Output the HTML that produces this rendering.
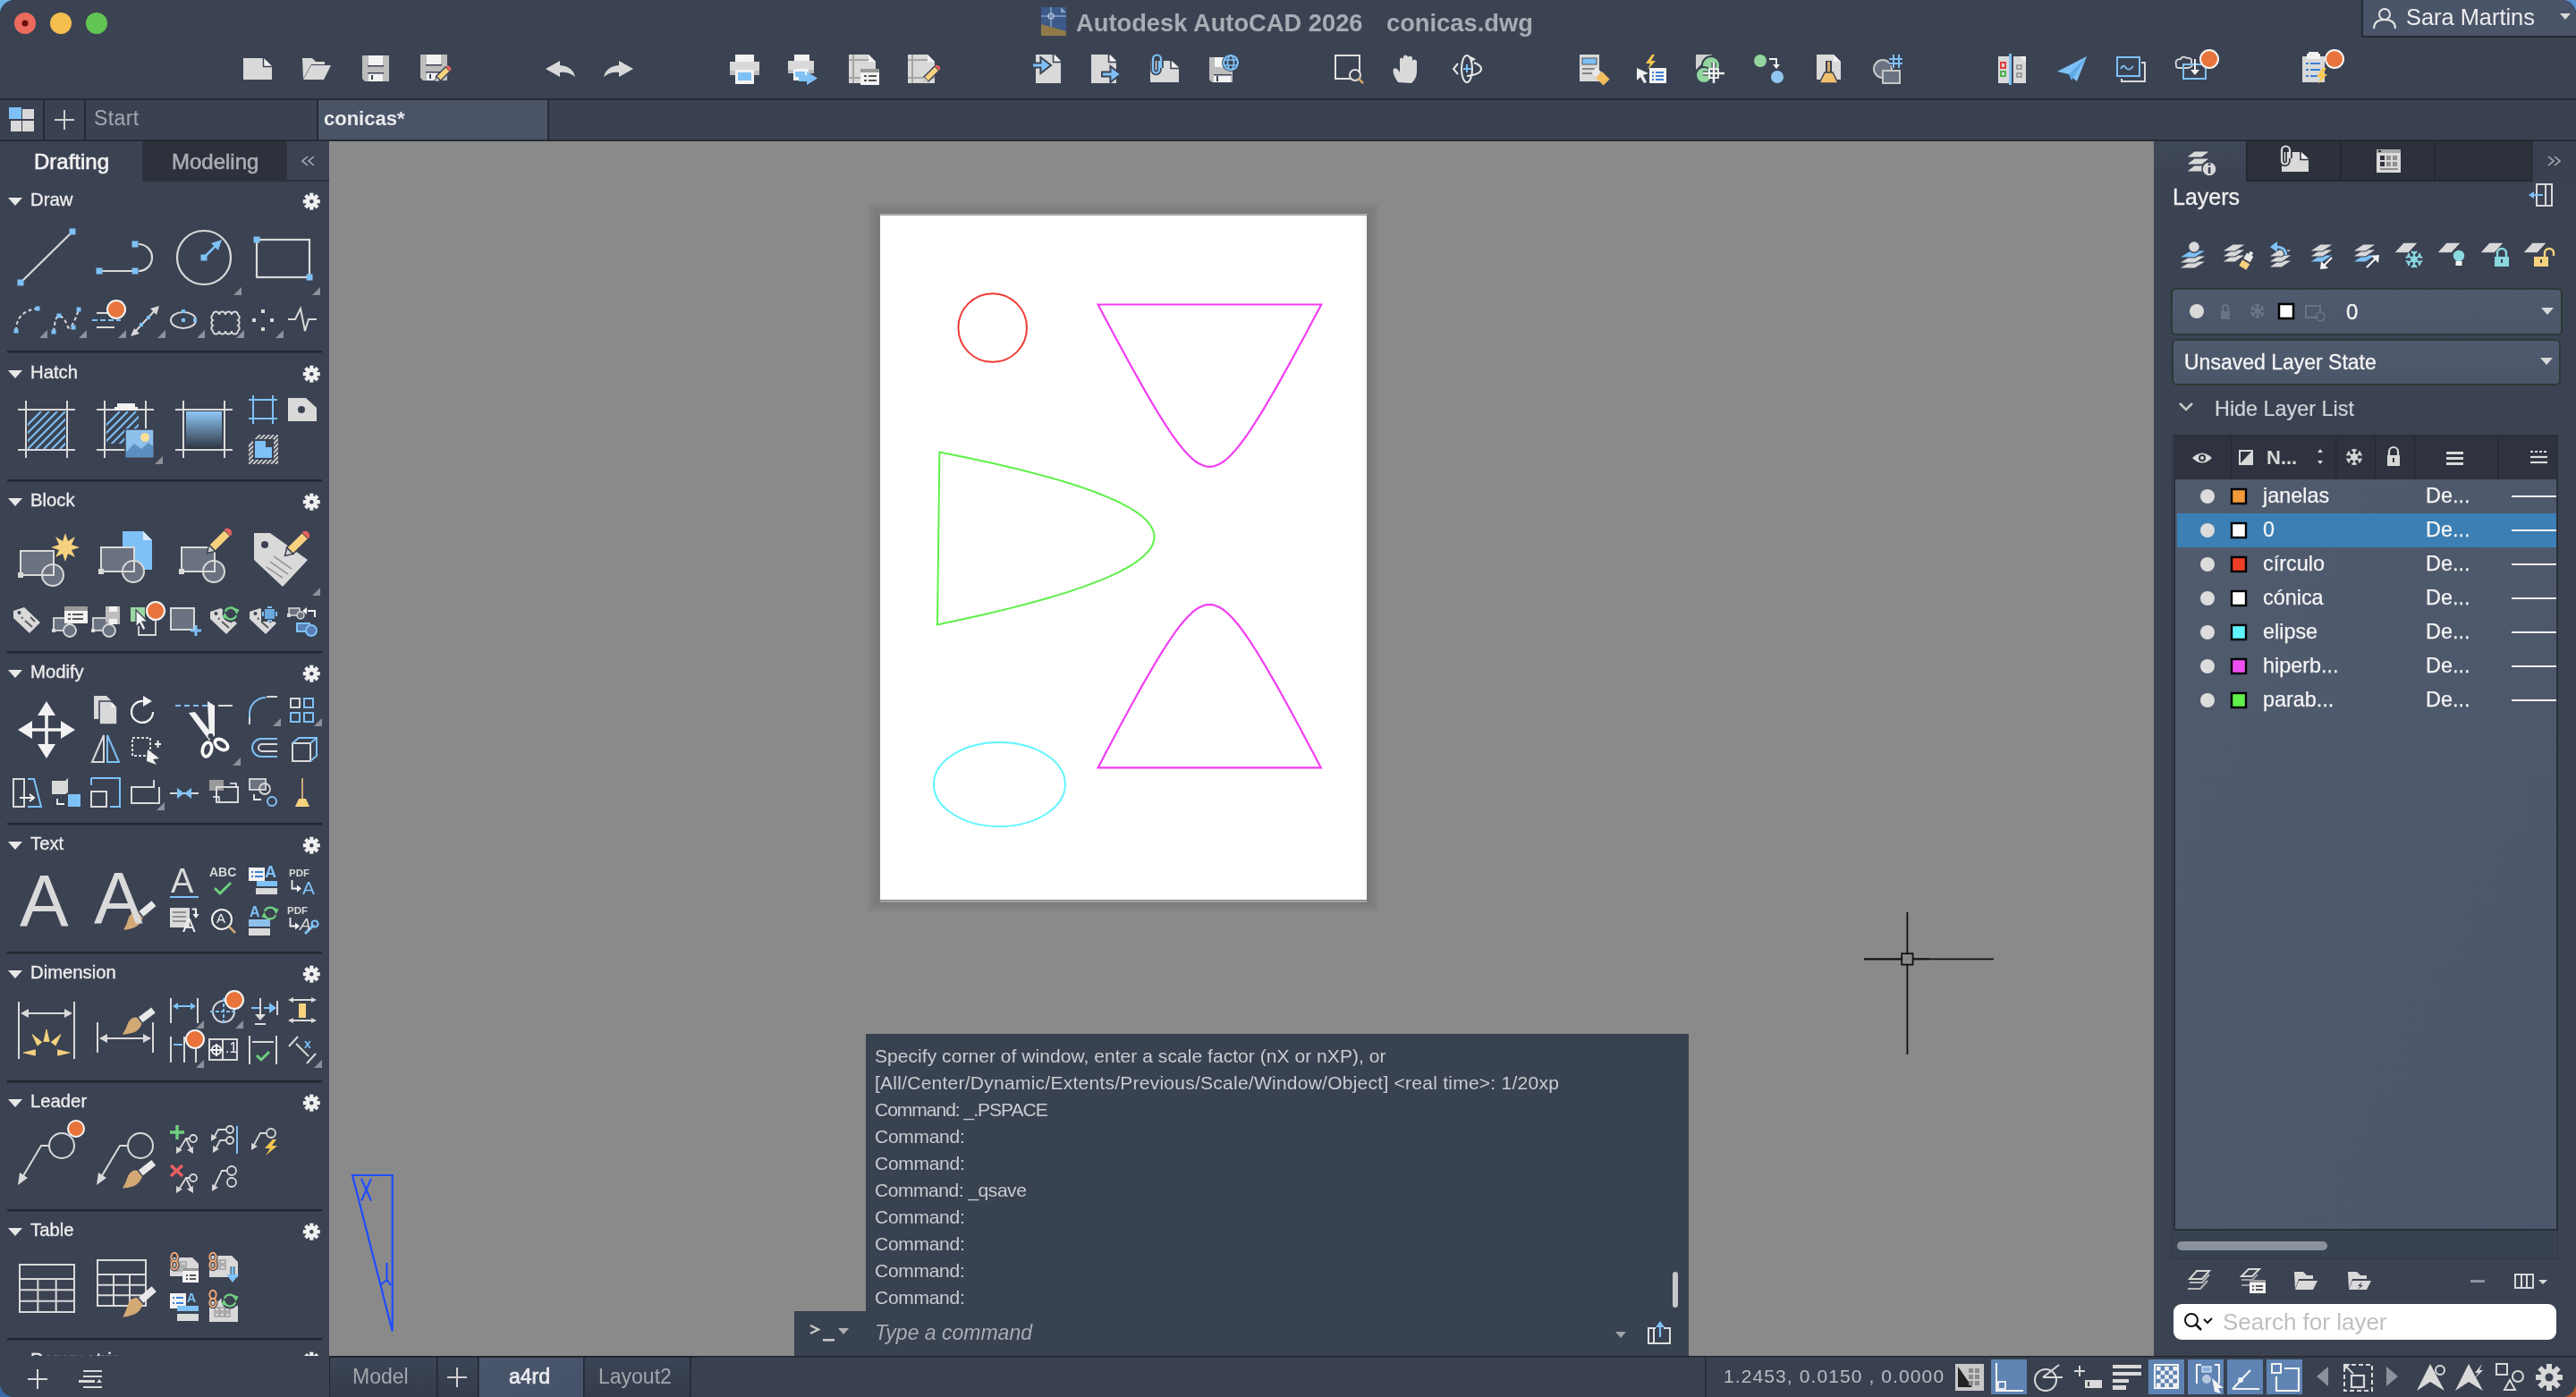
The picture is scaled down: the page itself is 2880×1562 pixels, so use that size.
<!DOCTYPE html>
<html><head><meta charset="utf-8">
<style>
*{margin:0;padding:0;box-sizing:border-box}
html,body{width:2880px;height:1562px;overflow:hidden;background:linear-gradient(90deg,#6cb4e6 0,#6cb4e6 50%,#5a90d0 50%);}
body{font-family:"Liberation Sans",sans-serif;position:relative}
#win{position:absolute;left:0;top:0;width:2880px;height:1562px;border-radius:16px;overflow:hidden;background:#3b4252}
.cn{position:absolute;width:40px;height:40px}
.t{position:absolute;white-space:nowrap;line-height:1;will-change:transform}
</style></head><body>
<div class="cn" style="left:0;top:0;background:#6cb4e6"></div><div class="cn" style="right:0;top:0;background:#5a90d0"></div><div class="cn" style="left:0;bottom:0;background:#3a6aa8"></div><div class="cn" style="right:0;bottom:0;background:#b8582a"></div>
<div id="win">
<svg width="2880" height="1562" viewBox="0 0 2880 1562" style="position:absolute;left:0;top:0"><rect x="368" y="158" width="2040" height="1358" fill="#8a8a8a" /><rect x="970" y="227" width="572" height="793" fill="#000" fill-opacity="0.017"/><rect x="972" y="229" width="568" height="789" fill="#000" fill-opacity="0.017"/><rect x="974" y="231" width="564" height="785" fill="#000" fill-opacity="0.017"/><rect x="976" y="233" width="560" height="781" fill="#000" fill-opacity="0.017"/><rect x="978" y="235" width="556" height="777" fill="#000" fill-opacity="0.017"/><rect x="980" y="237" width="552" height="773" fill="#000" fill-opacity="0.017"/><rect x="982" y="239" width="548" height="769" fill="#000" fill-opacity="0.017"/><rect x="983" y="238" width="546" height="1" fill="#777" /><rect x="983" y="239" width="546" height="1.5" fill="#b5b5b5" /><rect x="983" y="1006" width="546" height="1" fill="#777" /><rect x="983" y="1007" width="546" height="1.5" fill="#b5b5b5" /><rect x="982" y="240" width="2" height="768" fill="#7a7a7a" /><rect x="1528" y="240" width="2" height="768" fill="#7a7a7a" /><rect x="984" y="241" width="544" height="765" fill="#ffffff" /><circle cx="1109.7" cy="366.5" r="38.3" fill="none" stroke="#ee3b33" stroke-width="2" /><path d="M1227.6,340.5 L1230.7,346.4 L1233.8,352.3 L1237.0,358.2 L1240.1,364.0 L1243.2,369.9 L1246.3,375.7 L1249.4,381.5 L1252.6,387.3 L1255.7,393.0 L1258.8,398.8 L1261.9,404.5 L1265.0,410.1 L1268.2,415.8 L1271.3,421.4 L1274.4,426.9 L1277.5,432.4 L1280.6,437.9 L1283.8,443.3 L1286.9,448.6 L1290.0,453.9 L1293.1,459.1 L1296.2,464.2 L1299.4,469.2 L1302.5,474.1 L1305.6,478.9 L1308.7,483.5 L1311.8,488.0 L1315.0,492.4 L1318.1,496.5 L1321.2,500.4 L1324.3,504.1 L1327.4,507.6 L1330.6,510.7 L1333.7,513.5 L1336.8,516.0 L1339.9,518.0 L1343.0,519.6 L1346.2,520.8 L1349.3,521.6 L1352.4,521.8 L1355.5,521.6 L1358.6,520.8 L1361.8,519.6 L1364.9,518.0 L1368.0,516.0 L1371.1,513.5 L1374.2,510.7 L1377.4,507.6 L1380.5,504.1 L1383.6,500.4 L1386.7,496.5 L1389.8,492.4 L1393.0,488.0 L1396.1,483.5 L1399.2,478.9 L1402.3,474.1 L1405.4,469.2 L1408.6,464.2 L1411.7,459.1 L1414.8,453.9 L1417.9,448.6 L1421.0,443.3 L1424.2,437.9 L1427.3,432.4 L1430.4,426.9 L1433.5,421.4 L1436.6,415.8 L1439.8,410.1 L1442.9,404.5 L1446.0,398.8 L1449.1,393.0 L1452.2,387.3 L1455.4,381.5 L1458.5,375.7 L1461.6,369.9 L1464.7,364.0 L1467.8,358.2 L1471.0,352.3 L1474.1,346.4 L1477.2,340.5 Z" fill="none" stroke="#f23ef2" stroke-width="2.2" /><path d="M1227.6,858.4 L1230.7,852.5 L1233.8,846.5 L1236.9,840.6 L1240.1,834.7 L1243.2,828.8 L1246.3,823.0 L1249.4,817.1 L1252.5,811.3 L1255.6,805.5 L1258.8,799.8 L1261.9,794.0 L1265.0,788.3 L1268.1,782.7 L1271.2,777.0 L1274.3,771.4 L1277.4,765.9 L1280.6,760.4 L1283.7,755.0 L1286.8,749.6 L1289.9,744.3 L1293.0,739.1 L1296.1,734.0 L1299.2,728.9 L1302.4,724.0 L1305.5,719.2 L1308.6,714.5 L1311.7,710.0 L1314.8,705.6 L1317.9,701.4 L1321.0,697.5 L1324.2,693.8 L1327.3,690.3 L1330.4,687.2 L1333.5,684.3 L1336.6,681.9 L1339.7,679.8 L1342.9,678.2 L1346.0,677.0 L1349.1,676.2 L1352.2,676.0 L1355.3,676.2 L1358.4,677.0 L1361.5,678.2 L1364.7,679.8 L1367.8,681.9 L1370.9,684.3 L1374.0,687.2 L1377.1,690.3 L1380.2,693.8 L1383.4,697.5 L1386.5,701.4 L1389.6,705.6 L1392.7,710.0 L1395.8,714.5 L1398.9,719.2 L1402.0,724.0 L1405.2,728.9 L1408.3,734.0 L1411.4,739.1 L1414.5,744.3 L1417.6,749.6 L1420.7,755.0 L1423.8,760.4 L1427.0,765.9 L1430.1,771.4 L1433.2,777.0 L1436.3,782.7 L1439.4,788.3 L1442.5,794.0 L1445.7,799.8 L1448.8,805.5 L1451.9,811.3 L1455.0,817.1 L1458.1,823.0 L1461.2,828.8 L1464.3,834.7 L1467.5,840.6 L1470.6,846.5 L1473.7,852.5 L1476.8,858.4 Z" fill="none" stroke="#f23ef2" stroke-width="2.2" /><path d="M1050.4,505.6 L1066.2,508.7 L1081.4,511.8 L1096.1,515.0 L1110.3,518.1 L1123.9,521.2 L1137.0,524.3 L1149.6,527.5 L1161.6,530.6 L1173.1,533.8 L1184.1,536.9 L1194.5,540.0 L1204.4,543.2 L1213.7,546.4 L1222.5,549.5 L1230.8,552.7 L1238.5,555.8 L1245.7,559.0 L1252.4,562.2 L1258.5,565.4 L1264.1,568.5 L1269.1,571.7 L1273.7,574.9 L1277.6,578.1 L1281.1,581.3 L1284.0,584.5 L1286.4,587.7 L1288.2,590.9 L1289.5,594.1 L1290.3,597.3 L1290.5,600.5 L1290.2,603.7 L1289.3,606.9 L1288.0,610.2 L1286.1,613.4 L1283.6,616.6 L1280.6,619.8 L1277.1,623.1 L1273.0,626.3 L1268.4,629.6 L1263.3,632.8 L1257.6,636.0 L1251.4,639.3 L1244.7,642.6 L1237.4,645.8 L1229.6,649.1 L1221.2,652.3 L1212.3,655.6 L1202.9,658.9 L1193.0,662.2 L1182.5,665.4 L1171.4,668.7 L1159.9,672.0 L1147.7,675.3 L1135.1,678.6 L1121.9,681.9 L1108.2,685.2 L1094.0,688.5 L1079.2,691.8 L1063.9,695.1 L1048.0,698.4 Z" fill="none" stroke="#5ff04a" stroke-width="2" /><ellipse cx="1117.4" cy="877" rx="73.5" ry="47" fill="none" stroke="#5ff5ff" stroke-width="2"/><g stroke="#1f4dff" stroke-width="2.2" fill="none"><path d="M394,1314 H438.7 V1488.5 Z"/><path d="M404,1318 L415,1342.6 M415,1318 L404,1342.6"/><path d="M432.5,1412 V1431 L425,1437 M432.5,1431 L437,1437"/></g><g stroke="#111" stroke-width="1.8"><line x1="2132.4" y1="1020" x2="2132.4" y2="1066"/><line x1="2132.4" y1="1079" x2="2132.4" y2="1179"/><line x1="2084" y1="1072.3" x2="2126" y2="1072.3" stroke-width="2.2"/><line x1="2139" y1="1072.3" x2="2157" y2="1072.3" stroke-width="2.2"/><line x1="2157" y1="1072.3" x2="2229" y2="1072.3"/><rect x="2126.2" y="1066.2" width="12.4" height="12.4" fill="none"/></g><rect x="968" y="1156" width="920" height="311" fill="#394250" /><rect x="888" y="1466" width="1000" height="50" fill="#394250" /><rect x="1870" y="1422" width="6" height="40" fill="#c4c7cc" rx="3"/><path d="M906,1482 L915,1486.5 L906,1491" fill="none" stroke="#c8c8c8" stroke-width="2.4" /><rect x="920" y="1497" width="13" height="2.6" fill="#c8c8c8" /><polygon points="937,1485 949,1485 943,1492" fill="#b0b0b0" stroke="none" stroke-width="2" /><polygon points="1806,1489 1818,1489 1812,1496" fill="#9ea3ab" stroke="none" stroke-width="2" /><path d="M1851,1485 H1843 V1502 H1867 V1485 H1860" fill="none" stroke="#e0e0e0" stroke-width="2" /><line x1="1849" y1="1485" x2="1849" y2="1502" stroke="#e0e0e0" stroke-width="2" /><line x1="1856" y1="1481" x2="1856" y2="1495" stroke="#7ec1f6" stroke-width="2.2" /><polygon points="1851,1484 1861,1484 1856,1477" fill="#7ec1f6" stroke="none" stroke-width="2" /><rect x="0" y="158" width="368" height="1358" fill="#3b4252" /><rect x="159" y="158" width="162" height="45" fill="#2c313c" /><rect x="321" y="201" width="47" height="2" fill="#2c313c" /><path d="M344,175 L338,180 L344,185 M351,175 L345,180 L351,185" fill="none" stroke="#a9acb3" stroke-width="1.6" /><polygon points="9,221 25,221 17,230" fill="#e8e8e8" stroke="none" stroke-width="2" /><g transform="translate(348.3,225.2)"><rect x="-2.1" y="-9.5" width="4.2" height="5" fill="#f0f0f0" transform="rotate(0)"/><rect x="-2.1" y="-9.5" width="4.2" height="5" fill="#f0f0f0" transform="rotate(45)"/><rect x="-2.1" y="-9.5" width="4.2" height="5" fill="#f0f0f0" transform="rotate(90)"/><rect x="-2.1" y="-9.5" width="4.2" height="5" fill="#f0f0f0" transform="rotate(135)"/><rect x="-2.1" y="-9.5" width="4.2" height="5" fill="#f0f0f0" transform="rotate(180)"/><rect x="-2.1" y="-9.5" width="4.2" height="5" fill="#f0f0f0" transform="rotate(225)"/><rect x="-2.1" y="-9.5" width="4.2" height="5" fill="#f0f0f0" transform="rotate(270)"/><rect x="-2.1" y="-9.5" width="4.2" height="5" fill="#f0f0f0" transform="rotate(315)"/><circle r="6.7" fill="#f0f0f0"/><circle r="2.2" fill="#3b4252"/></g><line x1="24" y1="315" x2="80" y2="260" stroke="#d9d9d9" stroke-width="2.2" /><rect x="19.5" y="312.5" width="7" height="7" fill="#7ec1f6" /><rect x="77.5" y="255.5" width="7" height="7" fill="#7ec1f6" /><line x1="111" y1="303" x2="151" y2="303" stroke="#d9d9d9" stroke-width="2.2" /><path d="M155,273 A15,15 0 0 1 155,303" fill="none" stroke="#d9d9d9" stroke-width="2.2" /><rect x="107.5" y="299.5" width="7" height="7" fill="#7ec1f6" /><rect x="147.5" y="299.5" width="7" height="7" fill="#7ec1f6" /><rect x="147.5" y="269.5" width="7" height="7" fill="#7ec1f6" /><circle cx="228" cy="288" r="30" fill="none" stroke="#d9d9d9" stroke-width="2.2" /><rect x="224.5" y="284.5" width="7" height="7" fill="#7ec1f6" /><line x1="229" y1="287" x2="245" y2="271" stroke="#7ec1f6" stroke-width="2.5" /><polygon points="248,268 236,272 244,280" fill="#7ec1f6" stroke="none" stroke-width="2" /><polygon points="270,330 261,330 270,321" fill="#8c919a" stroke="none" stroke-width="2" /><rect x="287" y="268" width="59" height="42" fill="none" stroke="#d9d9d9" stroke-width="2.2"/><rect x="283.5" y="264.5" width="7" height="7" fill="#7ec1f6" /><rect x="342.5" y="306.5" width="7" height="7" fill="#7ec1f6" /><polygon points="358,330 349,330 358,321" fill="#8c919a" stroke="none" stroke-width="2" /><path d="M18,370 Q18,348 42,345" fill="none" stroke="#d9d9d9" stroke-width="2" stroke-dasharray="4 3"/><rect x="15.5" y="367.5" width="5" height="5" fill="#7ec1f6" /><rect x="39.5" y="342.5" width="5" height="5" fill="#7ec1f6" /><path d="M60,371 Q62,352 66,353 Q72,354 76,366 Q80,370 88,346" fill="none" stroke="#d9d9d9" stroke-width="2" stroke-dasharray="4 3"/><rect x="57.5" y="368.5" width="5" height="5" fill="#7ec1f6" /><rect x="63.5" y="350.5" width="5" height="5" fill="#7ec1f6" /><rect x="79.5" y="363.5" width="5" height="5" fill="#7ec1f6" /><rect x="85.5" y="343.5" width="5" height="5" fill="#7ec1f6" /><line x1="108" y1="350" x2="130" y2="350" stroke="#d9d9d9" stroke-width="2" /><line x1="103" y1="358" x2="135" y2="358" stroke="#7ec1f6" stroke-width="2" stroke-dasharray="6 3"/><line x1="108" y1="366" x2="128" y2="366" stroke="#d9d9d9" stroke-width="2" /><circle cx="130" cy="346" r="11" fill="#f4f4f4" stroke="none" stroke-width="2" /><circle cx="130" cy="346" r="9" fill="#e8743b" stroke="none" stroke-width="2" /><line x1="150" y1="372" x2="176" y2="344" stroke="#d9d9d9" stroke-width="2" /><polygon points="146,376 156,373 150,367" fill="#d9d9d9" stroke="none" stroke-width="2" /><polygon points="178,342 168,345 175,352" fill="#d9d9d9" stroke="none" stroke-width="2" /><rect x="156.0" y="361.0" width="4" height="4" fill="#7ec1f6" /><rect x="164.0" y="353.0" width="4" height="4" fill="#7ec1f6" /><ellipse cx="205" cy="358" rx="14" ry="9" fill="none" stroke="#d9d9d9" stroke-width="2"/><rect x="203.0" y="356.0" width="4" height="4" fill="#7ec1f6" /><rect x="203.0" y="346.0" width="4" height="4" fill="#7ec1f6" /><rect x="216.0" y="356.0" width="4" height="4" fill="#7ec1f6" /><path d="M238,352 a3.5,3.5 0 0 1 7,0 a3.5,3.5 0 0 1 7,0 a3.5,3.5 0 0 1 7,0 a3.5,3.5 0 0 1 7,0 a3.5,3.5 0 0 1 0,6 a3.5,3.5 0 0 1 0,6 a3.5,3.5 0 0 1 0,6 a3.5,3.5 0 0 1 -7,0 a3.5,3.5 0 0 1 -7,0 a3.5,3.5 0 0 1 -7,0 a3.5,3.5 0 0 1 -7,0 a3.5,3.5 0 0 1 0,-6 a3.5,3.5 0 0 1 0,-6 a3.5,3.5 0 0 1 0,-6 " fill="none" stroke="#d9d9d9" stroke-width="2"/><rect x="292.0" y="346.0" width="4" height="4" fill="#d9d9d9" /><rect x="282.0" y="356.0" width="4" height="4" fill="#d9d9d9" /><rect x="302.0" y="356.0" width="4" height="4" fill="#d9d9d9" /><rect x="292.0" y="366.0" width="4" height="4" fill="#d9d9d9" /><path d="M322,357 H330 L336,345 L341,370 L345,357 H354" fill="none" stroke="#d9d9d9" stroke-width="2" /><polygon points="53,378 44,378 53,369" fill="#8c919a" stroke="none" stroke-width="2" /><polygon points="97,378 88,378 97,369" fill="#8c919a" stroke="none" stroke-width="2" /><polygon points="141,378 132,378 141,369" fill="#8c919a" stroke="none" stroke-width="2" /><polygon points="185,378 176,378 185,369" fill="#8c919a" stroke="none" stroke-width="2" /><polygon points="229,378 220,378 229,369" fill="#8c919a" stroke="none" stroke-width="2" /><polygon points="273,378 264,378 273,369" fill="#8c919a" stroke="none" stroke-width="2" /><polygon points="317,378 308,378 317,369" fill="#8c919a" stroke="none" stroke-width="2" /><rect x="8" y="392" width="352" height="2.5" fill="#22262e" /><polygon points="9,414 25,414 17,423" fill="#e8e8e8" stroke="none" stroke-width="2" /><g transform="translate(348.3,418.2)"><rect x="-2.1" y="-9.5" width="4.2" height="5" fill="#f0f0f0" transform="rotate(0)"/><rect x="-2.1" y="-9.5" width="4.2" height="5" fill="#f0f0f0" transform="rotate(45)"/><rect x="-2.1" y="-9.5" width="4.2" height="5" fill="#f0f0f0" transform="rotate(90)"/><rect x="-2.1" y="-9.5" width="4.2" height="5" fill="#f0f0f0" transform="rotate(135)"/><rect x="-2.1" y="-9.5" width="4.2" height="5" fill="#f0f0f0" transform="rotate(180)"/><rect x="-2.1" y="-9.5" width="4.2" height="5" fill="#f0f0f0" transform="rotate(225)"/><rect x="-2.1" y="-9.5" width="4.2" height="5" fill="#f0f0f0" transform="rotate(270)"/><rect x="-2.1" y="-9.5" width="4.2" height="5" fill="#f0f0f0" transform="rotate(315)"/><circle r="6.7" fill="#f0f0f0"/><circle r="2.2" fill="#3b4252"/></g><line x1="20" y1="458" x2="84" y2="458" stroke="#d9d9d9" stroke-width="2" /><line x1="20" y1="503" x2="84" y2="503" stroke="#d9d9d9" stroke-width="2" /><line x1="29" y1="448" x2="29" y2="512" stroke="#d9d9d9" stroke-width="2" /><line x1="75" y1="448" x2="75" y2="512" stroke="#d9d9d9" stroke-width="2" /><clipPath id="hc1"><rect x="31" y="460" width="42" height="42"/></clipPath><g clip-path="url(#hc1)"><line x1="4" y1="502" x2="46" y2="460" stroke="#7ec1f6" stroke-width="2"/><line x1="13" y1="502" x2="55" y2="460" stroke="#7ec1f6" stroke-width="2"/><line x1="22" y1="502" x2="64" y2="460" stroke="#7ec1f6" stroke-width="2"/><line x1="31" y1="502" x2="73" y2="460" stroke="#7ec1f6" stroke-width="2"/><line x1="40" y1="502" x2="82" y2="460" stroke="#7ec1f6" stroke-width="2"/><line x1="49" y1="502" x2="91" y2="460" stroke="#7ec1f6" stroke-width="2"/><line x1="58" y1="502" x2="100" y2="460" stroke="#7ec1f6" stroke-width="2"/><line x1="67" y1="502" x2="109" y2="460" stroke="#7ec1f6" stroke-width="2"/><line x1="76" y1="502" x2="118" y2="460" stroke="#7ec1f6" stroke-width="2"/><line x1="85" y1="502" x2="127" y2="460" stroke="#7ec1f6" stroke-width="2"/><line x1="94" y1="502" x2="136" y2="460" stroke="#7ec1f6" stroke-width="2"/></g><line x1="108" y1="458" x2="172" y2="458" stroke="#d9d9d9" stroke-width="2" /><line x1="108" y1="503" x2="172" y2="503" stroke="#d9d9d9" stroke-width="2" /><line x1="117" y1="448" x2="117" y2="512" stroke="#d9d9d9" stroke-width="2" /><line x1="163" y1="448" x2="163" y2="512" stroke="#d9d9d9" stroke-width="2" /><clipPath id="hc2"><rect x="119" y="460" width="36" height="36"/></clipPath><g clip-path="url(#hc2)"><line x1="92" y1="502" x2="134" y2="460" stroke="#7ec1f6" stroke-width="2"/><line x1="101" y1="502" x2="143" y2="460" stroke="#7ec1f6" stroke-width="2"/><line x1="110" y1="502" x2="152" y2="460" stroke="#7ec1f6" stroke-width="2"/><line x1="119" y1="502" x2="161" y2="460" stroke="#7ec1f6" stroke-width="2"/><line x1="128" y1="502" x2="170" y2="460" stroke="#7ec1f6" stroke-width="2"/><line x1="137" y1="502" x2="179" y2="460" stroke="#7ec1f6" stroke-width="2"/><line x1="146" y1="502" x2="188" y2="460" stroke="#7ec1f6" stroke-width="2"/><line x1="155" y1="502" x2="197" y2="460" stroke="#7ec1f6" stroke-width="2"/><line x1="164" y1="502" x2="206" y2="460" stroke="#7ec1f6" stroke-width="2"/><line x1="173" y1="502" x2="215" y2="460" stroke="#7ec1f6" stroke-width="2"/><line x1="182" y1="502" x2="224" y2="460" stroke="#7ec1f6" stroke-width="2"/></g><rect x="131" y="451" width="20" height="5" fill="#f2f2f2" /><rect x="128" y="455" width="26" height="4" fill="#f2f2f2" /><rect x="140" y="480" width="32" height="32" fill="#8ec0ec" stroke="#3b4252" stroke-width="1.5"/><circle cx="162" cy="489" r="5" fill="#f6e09a" stroke="none" stroke-width="2" /><path d="M140.8,506 L150,496 L158,502 L166,495 L171.2,499 V511.2 H140.8 Z" fill="#5a8fc0" stroke="none" stroke-width="2" /><polygon points="182,519 173,519 182,510" fill="#8c919a" stroke="none" stroke-width="2" /><line x1="196" y1="458" x2="260" y2="458" stroke="#d9d9d9" stroke-width="2" /><line x1="196" y1="503" x2="260" y2="503" stroke="#d9d9d9" stroke-width="2" /><line x1="205" y1="448" x2="205" y2="512" stroke="#d9d9d9" stroke-width="2" /><line x1="251" y1="448" x2="251" y2="512" stroke="#d9d9d9" stroke-width="2" /><defs><linearGradient id="grd" x1="0" y1="0" x2="0" y2="1"><stop offset="0" stop-color="#8fc8f8"/><stop offset="1" stop-color="#2e3542"/></linearGradient></defs><rect x="208" y="460" width="40" height="42" fill="url(#grd)" /><line x1="278" y1="447" x2="310" y2="447" stroke="#7ec1f6" stroke-width="2" /><line x1="278" y1="468" x2="310" y2="468" stroke="#7ec1f6" stroke-width="2" /><line x1="283" y1="442" x2="283" y2="474" stroke="#7ec1f6" stroke-width="2" /><line x1="305" y1="442" x2="305" y2="474" stroke="#7ec1f6" stroke-width="2" /><polygon points="322,445 342,445 354,456 354,471 322,471" fill="#d9d9d9" stroke="none" stroke-width="2" /><circle cx="337" cy="458" r="4" fill="#3b4252" stroke="none" stroke-width="2" /><clipPath id="hc3"><path d="M278,486 H311 V519 H278 Z M283,491 V514 H306 V491 Z" clip-rule="evenodd"/></clipPath><g clip-path="url(#hc3)"><line x1="258" y1="519" x2="291" y2="486" stroke="#c8c8c8" stroke-width="2"/><line x1="263" y1="519" x2="296" y2="486" stroke="#c8c8c8" stroke-width="2"/><line x1="268" y1="519" x2="301" y2="486" stroke="#c8c8c8" stroke-width="2"/><line x1="273" y1="519" x2="306" y2="486" stroke="#c8c8c8" stroke-width="2"/><line x1="278" y1="519" x2="311" y2="486" stroke="#c8c8c8" stroke-width="2"/><line x1="283" y1="519" x2="316" y2="486" stroke="#c8c8c8" stroke-width="2"/><line x1="288" y1="519" x2="321" y2="486" stroke="#c8c8c8" stroke-width="2"/><line x1="293" y1="519" x2="326" y2="486" stroke="#c8c8c8" stroke-width="2"/><line x1="298" y1="519" x2="331" y2="486" stroke="#c8c8c8" stroke-width="2"/><line x1="303" y1="519" x2="336" y2="486" stroke="#c8c8c8" stroke-width="2"/><line x1="308" y1="519" x2="341" y2="486" stroke="#c8c8c8" stroke-width="2"/><line x1="313" y1="519" x2="346" y2="486" stroke="#c8c8c8" stroke-width="2"/><line x1="318" y1="519" x2="351" y2="486" stroke="#c8c8c8" stroke-width="2"/><line x1="323" y1="519" x2="356" y2="486" stroke="#c8c8c8" stroke-width="2"/></g><polygon points="285,493 297,493 297,500 304,500 304,512 285,512" fill="#7ec1f6" stroke="none" stroke-width="2" /><rect x="8" y="536" width="352" height="2.5" fill="#22262e" /><polygon points="9,557 25,557 17,566" fill="#e8e8e8" stroke="none" stroke-width="2" /><g transform="translate(348.3,561.2)"><rect x="-2.1" y="-9.5" width="4.2" height="5" fill="#f0f0f0" transform="rotate(0)"/><rect x="-2.1" y="-9.5" width="4.2" height="5" fill="#f0f0f0" transform="rotate(45)"/><rect x="-2.1" y="-9.5" width="4.2" height="5" fill="#f0f0f0" transform="rotate(90)"/><rect x="-2.1" y="-9.5" width="4.2" height="5" fill="#f0f0f0" transform="rotate(135)"/><rect x="-2.1" y="-9.5" width="4.2" height="5" fill="#f0f0f0" transform="rotate(180)"/><rect x="-2.1" y="-9.5" width="4.2" height="5" fill="#f0f0f0" transform="rotate(225)"/><rect x="-2.1" y="-9.5" width="4.2" height="5" fill="#f0f0f0" transform="rotate(270)"/><rect x="-2.1" y="-9.5" width="4.2" height="5" fill="#f0f0f0" transform="rotate(315)"/><circle r="6.7" fill="#f0f0f0"/><circle r="2.2" fill="#3b4252"/></g><rect x="23" y="616" width="37" height="27" fill="#6b7280" stroke="#d9d9d9" stroke-width="2"/><circle cx="59" cy="643" r="12" fill="#6b7280" stroke="#d9d9d9" stroke-width="2" /><path d="M47,643 H60 V631" fill="none" stroke="#d9d9d9" stroke-width="2" /><rect x="20" y="640" width="6" height="6" fill="#d9d9d9" /><path d="M73,596 L76,605 L84,600 L80,609 L89,612 L80,615 L84,623 L76,619 L73,628 L70,619 L62,623 L66,615 L57,612 L66,609 L62,600 L70,605 Z" fill="#f6d27e" stroke="none" stroke-width="2" /><polygon points="137,594 160,594 170,604 170,637 137,637" fill="#7ec1f6" stroke="none" stroke-width="2" /><polygon points="160,594 170,604 160,604" fill="#d8ecfb" stroke="none" stroke-width="2" /><rect x="113" y="612" width="37" height="27" fill="#6b7280" stroke="#d9d9d9" stroke-width="2"/><circle cx="149" cy="639" r="12" fill="#6b7280" stroke="#d9d9d9" stroke-width="2" /><path d="M137,639 H150 V627" fill="none" stroke="#d9d9d9" stroke-width="2" /><rect x="110" y="636" width="6" height="6" fill="#d9d9d9" /><rect x="203" y="612" width="37" height="27" fill="#6b7280" stroke="#d9d9d9" stroke-width="2"/><circle cx="239" cy="639" r="12" fill="#6b7280" stroke="#d9d9d9" stroke-width="2" /><path d="M227,639 H240 V627" fill="none" stroke="#d9d9d9" stroke-width="2" /><rect x="200" y="636" width="6" height="6" fill="#d9d9d9" /><g transform="translate(240,610) rotate(45)"><rect x="-5" y="-20" width="10" height="24" fill="#f6d27e" stroke="#3b4252" stroke-width="1.5"/><path d="M-5,-20 A5,5 0 0 1 5,-20 Z" fill="#e86060"/><polygon points="-5,4 5,4 0,12" fill="#d0d0d0" stroke="#3b4252" stroke-width="1.5"/></g><polygon points="284,596 302,596 344,626 316,656 284,626" fill="#d9d9d9" stroke="none" stroke-width="2" /><circle cx="296" cy="609" r="4" fill="#3b4252" stroke="none" stroke-width="2" /><line x1="302" y1="628" x2="322" y2="642" stroke="#888" stroke-width="1.5" /><line x1="298" y1="634" x2="316" y2="646" stroke="#888" stroke-width="1.5" /><line x1="306" y1="622" x2="326" y2="636" stroke="#888" stroke-width="1.5" /><g transform="translate(327,613) rotate(45)"><rect x="-5" y="-20" width="10" height="24" fill="#f6d27e" stroke="#3b4252" stroke-width="1.5"/><path d="M-5,-20 A5,5 0 0 1 5,-20 Z" fill="#e86060"/><polygon points="-5,4 5,4 0,12" fill="#d0d0d0" stroke="#3b4252" stroke-width="1.5"/></g><polygon points="358,666 349,666 358,657" fill="#8c919a" stroke="none" stroke-width="2" /><polygon points="15,683 27,679 45,696 33,708 15,691" fill="#d9d9d9" stroke="none" stroke-width="2" /><circle cx="21.5" cy="685" r="2" fill="#3b4252" stroke="none" stroke-width="2" /><line x1="24" y1="690" x2="25.5" y2="691.5" stroke="#555" stroke-width="1.8" /><line x1="28" y1="694" x2="36" y2="701" stroke="#555" stroke-width="1.8" /><line x1="34" y1="690" x2="39" y2="695" stroke="#555" stroke-width="1.8" /><rect x="60" y="691" width="17" height="14" fill="#6b7280" stroke="#d9d9d9" stroke-width="1.8"/><circle cx="78" cy="705" r="7" fill="#6b7280" stroke="#d9d9d9" stroke-width="1.8" /><rect x="58" y="703" width="4" height="4" fill="#d9d9d9" /><rect x="72" y="678" width="26" height="19" fill="#f2f2f2" /><rect x="72" y="678" width="26" height="5" fill="#9a9a9a" /><rect x="76" y="686" width="3" height="2" fill="#555" /><rect x="81" y="686" width="12" height="2" fill="#555" /><rect x="76" y="691" width="3" height="2" fill="#555" /><rect x="81" y="691" width="12" height="2" fill="#555" /><rect x="104" y="691" width="17" height="14" fill="#6b7280" stroke="#d9d9d9" stroke-width="1.8"/><circle cx="122" cy="705" r="7" fill="#6b7280" stroke="#d9d9d9" stroke-width="1.8" /><rect x="102" y="703" width="4" height="4" fill="#d9d9d9" /><polygon points="118,678 134,678 134,698 121,698 118,695" fill="#bdbdbd" stroke="none" stroke-width="2" /><rect x="122" y="678" width="9" height="6" fill="#f2f2f2" /><rect x="122" y="692" width="9" height="6" fill="#f2f2f2" /><rect x="146" y="679" width="16" height="16" fill="#98d8a0" /><polygon points="152,682 165,695 159,695 163,703 160,705 156,697 152,701" fill="#f2f2f2" stroke="#3b4252" stroke-width="1.2" /><path d="M155,700 V710 H174 V693 H170" fill="none" stroke="#d9d9d9" stroke-width="1.8" /><circle cx="174" cy="683" r="11" fill="#f4f4f4" stroke="none" stroke-width="2" /><circle cx="174" cy="683" r="9" fill="#e8743b" stroke="none" stroke-width="2" /><rect x="191" y="680" width="26" height="24" fill="#6b7280" stroke="#d9d9d9" stroke-width="2"/><line x1="213" y1="705" x2="225" y2="705" stroke="#7ec1f6" stroke-width="3" /><line x1="219" y1="699" x2="219" y2="711" stroke="#7ec1f6" stroke-width="3" /><polygon points="235,684 247,680 265,697 253,709 235,692" fill="#d9d9d9" stroke="none" stroke-width="2" /><circle cx="241.5" cy="686" r="2" fill="#3b4252" stroke="none" stroke-width="2" /><line x1="244" y1="691" x2="245.5" y2="692.5" stroke="#555" stroke-width="1.8" /><line x1="248" y1="695" x2="256" y2="702" stroke="#555" stroke-width="1.8" /><line x1="254" y1="691" x2="259" y2="696" stroke="#555" stroke-width="1.8" /><circle cx="258" cy="686" r="9.5" fill="#3b4252" stroke="none" stroke-width="2" /><path d="M251.9,683.8 A6.5,6.5 0 0 1 263.6,682.8" fill="none" stroke="#6fd07f" stroke-width="2.4"/><path d="M264.1,688.2 A6.5,6.5 0 0 1 252.4,689.2" fill="none" stroke="#6fd07f" stroke-width="2.4"/><polygon points="267.6,681.8 260.6,679.2 264.6,687.2" fill="#6fd07f"/><polygon points="248.4,690.2 255.4,692.8 251.4,684.8" fill="#6fd07f"/><polygon points="279,684 291,680 309,697 297,709 279,692" fill="#d9d9d9" stroke="none" stroke-width="2" /><circle cx="285.5" cy="686" r="2" fill="#3b4252" stroke="none" stroke-width="2" /><line x1="288" y1="691" x2="289.5" y2="692.5" stroke="#555" stroke-width="1.8" /><line x1="292" y1="695" x2="300" y2="702" stroke="#555" stroke-width="1.8" /><line x1="298" y1="691" x2="303" y2="696" stroke="#555" stroke-width="1.8" /><rect x="292" y="677" width="18" height="18" fill="#3b4252" /><rect x="296" y="681" width="11" height="11" fill="#6ba8e0" /><rect x="299" y="678" width="5" height="2" fill="#7ec1f6" /><rect x="299" y="693" width="5" height="2" fill="#7ec1f6" /><rect x="293" y="684" width="2" height="5" fill="#7ec1f6" /><rect x="308" y="684" width="2" height="5" fill="#7ec1f6" /><rect x="323" y="680" width="12" height="8" fill="#6b7280" stroke="#d9d9d9" stroke-width="1.5"/><circle cx="336" cy="688" r="4" fill="#6b7280" stroke="#d9d9d9" stroke-width="1.5" /><rect x="321" y="686" width="4" height="4" fill="#d9d9d9" /><path d="M352,690 V683 H344" fill="none" stroke="#f2f2f2" stroke-width="2" /><polygon points="343,679 343,687 338,683" fill="#f2f2f2" stroke="none" stroke-width="2" /><rect x="332" y="697" width="14" height="9" fill="#5a7fb4" stroke="#7ec1f6" stroke-width="2"/><circle cx="348" cy="705" r="6" fill="#5a7fb4" stroke="#7ec1f6" stroke-width="2" /><rect x="8" y="728" width="352" height="2.5" fill="#22262e" /><polygon points="9,749 25,749 17,758" fill="#e8e8e8" stroke="none" stroke-width="2" /><g transform="translate(348.3,753.2)"><rect x="-2.1" y="-9.5" width="4.2" height="5" fill="#f0f0f0" transform="rotate(0)"/><rect x="-2.1" y="-9.5" width="4.2" height="5" fill="#f0f0f0" transform="rotate(45)"/><rect x="-2.1" y="-9.5" width="4.2" height="5" fill="#f0f0f0" transform="rotate(90)"/><rect x="-2.1" y="-9.5" width="4.2" height="5" fill="#f0f0f0" transform="rotate(135)"/><rect x="-2.1" y="-9.5" width="4.2" height="5" fill="#f0f0f0" transform="rotate(180)"/><rect x="-2.1" y="-9.5" width="4.2" height="5" fill="#f0f0f0" transform="rotate(225)"/><rect x="-2.1" y="-9.5" width="4.2" height="5" fill="#f0f0f0" transform="rotate(270)"/><rect x="-2.1" y="-9.5" width="4.2" height="5" fill="#f0f0f0" transform="rotate(315)"/><circle r="6.7" fill="#f0f0f0"/><circle r="2.2" fill="#3b4252"/></g><path d="M52,784 L62,800 H53.8 V814.2 H68 V806 L84,816 L68,826 V817.8 H53.8 V832 H62 L52,848 L42,832 H50.2 V817.8 H36 V826 L20,816 L36,806 V814.2 H50.2 V800 H42 Z" fill="#f2f2f2" stroke="none" stroke-width="2" /><polygon points="105,778 119,778 124,783 124,804 105,804" fill="#d9d9d9" stroke="none" stroke-width="2" /><polygon points="111,784 124,784 131,791 131,810 111,810" fill="#d9d9d9" stroke="#3b4252" stroke-width="1.6" /><polygon points="124.5,784.8 130.2,790.5 124.5,790.5" fill="#f2f2f2" stroke="none" stroke-width="2" /><path d="M171,796 A12,12 0 1 1 160,784" fill="none" stroke="#f2f2f2" stroke-width="2.2" /><polygon points="160,778 170,784 160,790" fill="#f2f2f2" stroke="none" stroke-width="2" /><polygon points="103,852 116,822 116,852" fill="none" stroke="#d9d9d9" stroke-width="2" /><polygon points="120,822 120,852 133,852" fill="none" stroke="#7ec1f6" stroke-width="2" /><rect x="148" y="825" width="20" height="20" fill="none" stroke="#d9d9d9" stroke-width="2" stroke-dasharray="3 2"/><polygon points="165,838 178,848 171,849 175,855 164,851" fill="#f2f2f2" stroke="none" stroke-width="2" /><line x1="173" y1="832" x2="180" y2="832" stroke="#f2f2f2" stroke-width="2" /><line x1="176.5" y1="828" x2="176.5" y2="836" stroke="#f2f2f2" stroke-width="2" /><line x1="196" y1="789" x2="236" y2="789" stroke="#7ec1f6" stroke-width="2" stroke-dasharray="6 4"/><line x1="244" y1="789" x2="260" y2="789" stroke="#d9d9d9" stroke-width="2" /><polygon points="232,784 240,789 240,823 234,826" fill="#f2f2f2" stroke="none" stroke-width="2" /><polygon points="211,797 218,796 238,822 234,828" fill="#f2f2f2" stroke="none" stroke-width="2" /><circle cx="235.5" cy="823" r="3" fill="#3b4252" stroke="none" stroke-width="2" /><ellipse cx="231.5" cy="838" rx="5" ry="8" fill="none" stroke="#ffffff" stroke-width="3.6" transform="rotate(15 231.5 838)"/><ellipse cx="247.5" cy="832.5" rx="8" ry="5" fill="none" stroke="#ffffff" stroke-width="3.6" transform="rotate(35 247.5 832.5)"/><polygon points="269,856 260,856 269,847" fill="#8c919a" stroke="none" stroke-width="2" /><path d="M279,810 V798 A18,18 0 0 1 297,780" fill="none" stroke="#7ec1f6" stroke-width="2" /><line x1="298" y1="779" x2="310" y2="779" stroke="#d9d9d9" stroke-width="2" /><line x1="279" y1="802" x2="279" y2="810" stroke="#d9d9d9" stroke-width="2" /><polygon points="314,812 305,812 314,803" fill="#8c919a" stroke="none" stroke-width="2" /><rect x="325" y="781" width="10" height="10" fill="none" stroke="#d9d9d9" stroke-width="2"/><rect x="325" y="797" width="10" height="10" fill="none" stroke="#7ec1f6" stroke-width="2"/><rect x="340" y="781" width="10" height="10" fill="none" stroke="#7ec1f6" stroke-width="2"/><rect x="340" y="797" width="10" height="10" fill="none" stroke="#7ec1f6" stroke-width="2"/><polygon points="360,812 351,812 360,803" fill="#8c919a" stroke="none" stroke-width="2" /><path d="M310,826 H292 A10,10 0 0 0 292,846 H310" fill="none" stroke="#7ec1f6" stroke-width="2" /><path d="M310,832 H293 A4,4 0 0 0 293,840 H310" fill="none" stroke="#d9d9d9" stroke-width="2" /><rect x="327" y="831" width="20" height="20" fill="none" stroke="#d9d9d9" stroke-width="2"/><path d="M327,831 L334,825 H354 V845 L347,851 M347,831 L354,825" fill="none" stroke="#7ec1f6" stroke-width="2" /><rect x="15" y="871" width="12" height="31" fill="none" stroke="#d9d9d9" stroke-width="2"/><path d="M31,871 H38 L46,902 H31" fill="none" stroke="#7ec1f6" stroke-width="2" /><path d="M22,892 H37 M33,888 L38,892 L33,896" fill="none" stroke="#f2f2f2" stroke-width="2" /><polygon points="58,873 73,873 76,870 76,886 73,888 58,888" fill="#d9d9d9" stroke="none" stroke-width="2" /><path d="M64,893 V899 H72" fill="none" stroke="#f2f2f2" stroke-width="1.8" /><rect x="76" y="888" width="14" height="14" fill="#7ec1f6" /><path d="M102,870 H134 V902 H123 M102,878 V870" fill="none" stroke="#7ec1f6" stroke-width="2" /><rect x="102" y="885" width="17" height="17" fill="none" stroke="#d9d9d9" stroke-width="2"/><path d="M172,872 V880 H147 V898 H178 V880" fill="none" stroke="#d9d9d9" stroke-width="2" /><polygon points="184,906 175,906 184,897" fill="#8c919a" stroke="none" stroke-width="2" /><line x1="190" y1="887" x2="222" y2="887" stroke="#d9d9d9" stroke-width="2" /><polygon points="198,881 206,887 198,893" fill="#7ec1f6" stroke="none" stroke-width="2" /><polygon points="214,881 206,887 214,893" fill="#7ec1f6" stroke="none" stroke-width="2" /><rect x="234" y="872" width="16" height="12" fill="#9a9a9a" /><rect x="242" y="880" width="24" height="17" fill="none" stroke="#d9d9d9" stroke-width="2"/><path d="M257,876 H264 V881" fill="none" stroke="#f2f2f2" stroke-width="1.5" /><path d="M245,896 V891 H238" fill="none" stroke="#f2f2f2" stroke-width="1.5" /><rect x="279" y="871" width="18" height="12" fill="#6b7280" stroke="#d9d9d9" stroke-width="1.8"/><circle cx="296" cy="882" r="6" fill="none" stroke="#d9d9d9" stroke-width="1.8" /><path d="M284,888 V894 H292" fill="none" stroke="#f2f2f2" stroke-width="1.8" /><circle cx="304" cy="896" r="5" fill="none" stroke="#7ec1f6" stroke-width="2" /><line x1="338" y1="870" x2="338" y2="893" stroke="#d2a874" stroke-width="2" /><polygon points="330,902 346,902 342,893 334,893" fill="#f6d27e" stroke="none" stroke-width="2" /><rect x="8" y="920" width="352" height="2.5" fill="#22262e" /><polygon points="9,941 25,941 17,950" fill="#e8e8e8" stroke="none" stroke-width="2" /><g transform="translate(348.3,945.2)"><rect x="-2.1" y="-9.5" width="4.2" height="5" fill="#f0f0f0" transform="rotate(0)"/><rect x="-2.1" y="-9.5" width="4.2" height="5" fill="#f0f0f0" transform="rotate(45)"/><rect x="-2.1" y="-9.5" width="4.2" height="5" fill="#f0f0f0" transform="rotate(90)"/><rect x="-2.1" y="-9.5" width="4.2" height="5" fill="#f0f0f0" transform="rotate(135)"/><rect x="-2.1" y="-9.5" width="4.2" height="5" fill="#f0f0f0" transform="rotate(180)"/><rect x="-2.1" y="-9.5" width="4.2" height="5" fill="#f0f0f0" transform="rotate(225)"/><rect x="-2.1" y="-9.5" width="4.2" height="5" fill="#f0f0f0" transform="rotate(270)"/><rect x="-2.1" y="-9.5" width="4.2" height="5" fill="#f0f0f0" transform="rotate(315)"/><circle r="6.7" fill="#f0f0f0"/><circle r="2.2" fill="#3b4252"/></g><g transform="translate(137.5,1039) rotate(-40)"><path d="M0,1 Q7.5600000000000005,-1.8 13.860000000000003,-6.300000000000001 Q21.42,-9.0 25.200000000000003,-4.5 L25.200000000000003,4.5 Q17.64,9.0 11.340000000000002,6.75 Q5.040000000000001,4.5 0,1 Z" fill="#d2a874"/><rect x="26.700000000000003" y="-3.825" width="18.299999999999997" height="7.65" fill="#e8e8e8" stroke="#3b4252" stroke-width="0"/></g><line x1="190" y1="1003" x2="222" y2="1003" stroke="#7ec1f6" stroke-width="2" /><path d="M240,993 L246,999 L258,987" fill="none" stroke="#6fd07f" stroke-width="3" /><rect x="278" y="970" width="18" height="15" fill="#f2f2f2" /><rect x="281" y="974" width="2" height="2" fill="#3a7fd5" /><rect x="285" y="974" width="9" height="2" fill="#3a7fd5" /><rect x="281" y="979" width="2" height="2" fill="#3a7fd5" /><rect x="285" y="979" width="9" height="2" fill="#3a7fd5" /><rect x="287" y="985" width="23" height="6" fill="#7ec1f6" /><rect x="286" y="993" width="24" height="7" fill="#d9d9d9" /><path d="M326.5,984 V993.5 H333" fill="none" stroke="#f2f2f2" stroke-width="1.8"/><polygon points="337,993.5 332,989.5 332,997.5" fill="#f2f2f2"/><rect x="190" y="1015" width="22" height="22" fill="#d9d9d9" /><line x1="193" y1="1020" x2="208" y2="1020" stroke="#777" stroke-width="1.5" /><line x1="193" y1="1025" x2="208" y2="1025" stroke="#777" stroke-width="1.5" /><line x1="193" y1="1030" x2="208" y2="1030" stroke="#777" stroke-width="1.5" /><path d="M214.5,1016.5 H219 V1023" fill="none" stroke="#f2f2f2" stroke-width="2" /><polygon points="215.5,1022 222.5,1022 219,1027" fill="#f2f2f2" stroke="none" stroke-width="2" /><circle cx="248" cy="1028" r="11" fill="none" stroke="#f2f2f2" stroke-width="2" /><line x1="256" y1="1036" x2="263" y2="1043" stroke="#d2a874" stroke-width="2.5" /><rect x="278" y="1028" width="24" height="8" fill="#8ec0ec" /><rect x="278" y="1038" width="24" height="8" fill="#d9d9d9" /><path d="M295.9,1018.8 A6.5,6.5 0 0 1 307.6,1017.8" fill="none" stroke="#6fd07f" stroke-width="2.2"/><path d="M308.1,1023.2 A6.5,6.5 0 0 1 296.4,1024.2" fill="none" stroke="#6fd07f" stroke-width="2.2"/><polygon points="311.6,1016.8 304.6,1014.2 308.6,1022.2" fill="#6fd07f"/><polygon points="292.4,1025.2 299.4,1027.8 295.4,1019.8" fill="#6fd07f"/><path d="M324.5,1026 V1035.5 H331" fill="none" stroke="#f2f2f2" stroke-width="1.8"/><polygon points="335,1035.5 330,1031.5 330,1039.5" fill="#f2f2f2"/><line x1="341" y1="1044" x2="351" y2="1034" stroke="#7ec1f6" stroke-width="3" /><circle cx="352" cy="1033" r="3.5" fill="none" stroke="#7ec1f6" stroke-width="2.2" /><rect x="8" y="1064" width="352" height="2.5" fill="#22262e" /><polygon points="9,1085 25,1085 17,1094" fill="#e8e8e8" stroke="none" stroke-width="2" /><g transform="translate(348.3,1089.2)"><rect x="-2.1" y="-9.5" width="4.2" height="5" fill="#f0f0f0" transform="rotate(0)"/><rect x="-2.1" y="-9.5" width="4.2" height="5" fill="#f0f0f0" transform="rotate(45)"/><rect x="-2.1" y="-9.5" width="4.2" height="5" fill="#f0f0f0" transform="rotate(90)"/><rect x="-2.1" y="-9.5" width="4.2" height="5" fill="#f0f0f0" transform="rotate(135)"/><rect x="-2.1" y="-9.5" width="4.2" height="5" fill="#f0f0f0" transform="rotate(180)"/><rect x="-2.1" y="-9.5" width="4.2" height="5" fill="#f0f0f0" transform="rotate(225)"/><rect x="-2.1" y="-9.5" width="4.2" height="5" fill="#f0f0f0" transform="rotate(270)"/><rect x="-2.1" y="-9.5" width="4.2" height="5" fill="#f0f0f0" transform="rotate(315)"/><circle r="6.7" fill="#f0f0f0"/><circle r="2.2" fill="#3b4252"/></g><line x1="21" y1="1120" x2="21" y2="1184" stroke="#d9d9d9" stroke-width="2" /><line x1="83" y1="1120" x2="83" y2="1184" stroke="#d9d9d9" stroke-width="2" /><line x1="25" y1="1133" x2="79" y2="1133" stroke="#d9d9d9" stroke-width="2" /><polygon points="23,1133 32,1128 32,1138" fill="#d9d9d9" stroke="none" stroke-width="2" /><polygon points="81,1133 72,1128 72,1138" fill="#d9d9d9" stroke="none" stroke-width="2" /><path d="M55.2,1164.5 L52.0,1151.0 L48.8,1164.5 Z" fill="#f6d27e" stroke="#f6d27e" stroke-width="0.8" stroke-linejoin="round"/><path d="M46.8,1165.2 L36.0,1156.5 L41.8,1169.1 Z" fill="#f6d27e" stroke="#f6d27e" stroke-width="0.8" stroke-linejoin="round"/><path d="M62.2,1169.1 L68.0,1156.5 L57.2,1165.2 Z" fill="#f6d27e" stroke="#f6d27e" stroke-width="0.8" stroke-linejoin="round"/><path d="M39.5,1173.8 L26.0,1177.0 L39.5,1180.2 Z" fill="#f6d27e" stroke="#f6d27e" stroke-width="0.8" stroke-linejoin="round"/><path d="M64.5,1180.2 L78.0,1177.0 L64.5,1173.8 Z" fill="#f6d27e" stroke="#f6d27e" stroke-width="0.8" stroke-linejoin="round"/><line x1="109" y1="1143" x2="109" y2="1177" stroke="#d9d9d9" stroke-width="2" /><line x1="171" y1="1143" x2="171" y2="1177" stroke="#d9d9d9" stroke-width="2" /><line x1="112" y1="1161" x2="168" y2="1161" stroke="#d9d9d9" stroke-width="2" /><polygon points="111,1161 120,1156 120,1166" fill="#d9d9d9" stroke="none" stroke-width="2" /><polygon points="169,1161 160,1156 160,1166" fill="#d9d9d9" stroke="none" stroke-width="2" /><g transform="translate(136.3,1156) rotate(-37)"><path d="M0,1 Q7.3919999999999995,-1.76 13.552000000000001,-6.16 Q20.944,-8.8 24.64,-4.4 L24.64,4.4 Q17.247999999999998,8.8 11.088000000000001,6.6 Q4.928000000000001,4.4 0,1 Z" fill="#d2a874"/><rect x="26.14" y="-3.74" width="17.86" height="7.48" fill="#e8e8e8" stroke="#3b4252" stroke-width="0"/></g><line x1="191" y1="1116" x2="191" y2="1144" stroke="#d9d9d9" stroke-width="2" /><line x1="221" y1="1116" x2="221" y2="1144" stroke="#d9d9d9" stroke-width="2" /><line x1="194" y1="1125" x2="218" y2="1125" stroke="#7ec1f6" stroke-width="2" /><polygon points="193,1125 199,1121 199,1129" fill="#7ec1f6" stroke="none" stroke-width="2" /><polygon points="219,1125 213,1121 213,1129" fill="#7ec1f6" stroke="none" stroke-width="2" /><polygon points="228,1150 219,1150 228,1141" fill="#8c919a" stroke="none" stroke-width="2" /><circle cx="250" cy="1131" r="12" fill="none" stroke="#d9d9d9" stroke-width="2" /><line x1="250" y1="1116" x2="250" y2="1146" stroke="#7ec1f6" stroke-width="2" stroke-dasharray="4 2"/><line x1="235" y1="1131" x2="265" y2="1131" stroke="#7ec1f6" stroke-width="2" stroke-dasharray="4 2"/><circle cx="262" cy="1118" r="11" fill="#f4f4f4" stroke="none" stroke-width="2" /><circle cx="262" cy="1118" r="9" fill="#e8743b" stroke="none" stroke-width="2" /><polygon points="272,1150 263,1150 272,1141" fill="#8c919a" stroke="none" stroke-width="2" /><line x1="281" y1="1127" x2="291" y2="1127" stroke="#7ec1f6" stroke-width="2" /><line x1="295" y1="1127" x2="304" y2="1127" stroke="#7ec1f6" stroke-width="2" /><polygon points="309,1127 301,1121 301,1133" fill="#7ec1f6" stroke="none" stroke-width="2" /><line x1="310" y1="1119" x2="310" y2="1135" stroke="#d9d9d9" stroke-width="2" /><line x1="291" y1="1116" x2="291" y2="1140" stroke="#d9d9d9" stroke-width="2" /><polygon points="285,1134 297,1134 291,1141" fill="#d9d9d9" stroke="none" stroke-width="2" /><line x1="285" y1="1145" x2="297" y2="1145" stroke="#d9d9d9" stroke-width="2" /><line x1="325" y1="1118" x2="351" y2="1118" stroke="#d9d9d9" stroke-width="2" /><line x1="325" y1="1141" x2="351" y2="1141" stroke="#d9d9d9" stroke-width="2" /><polygon points="322,1118 328,1115 328,1121" fill="#d9d9d9" stroke="none" stroke-width="2" /><polygon points="354,1118 348,1115 348,1121" fill="#d9d9d9" stroke="none" stroke-width="2" /><polygon points="322,1141 328,1138 328,1144" fill="#d9d9d9" stroke="none" stroke-width="2" /><polygon points="354,1141 348,1138 348,1144" fill="#d9d9d9" stroke="none" stroke-width="2" /><rect x="334" y="1122" width="8" height="16" fill="#f6d27e" /><line x1="191" y1="1159" x2="191" y2="1188" stroke="#d9d9d9" stroke-width="2" /><line x1="206" y1="1159" x2="206" y2="1188" stroke="#d9d9d9" stroke-width="2" /><line x1="219" y1="1172" x2="219" y2="1188" stroke="#d9d9d9" stroke-width="2" /><line x1="194" y1="1168" x2="204" y2="1168" stroke="#7ec1f6" stroke-width="2" /><circle cx="218" cy="1162" r="11" fill="#f4f4f4" stroke="none" stroke-width="2" /><circle cx="218" cy="1162" r="9" fill="#e8743b" stroke="none" stroke-width="2" /><polygon points="228,1194 219,1194 228,1185" fill="#8c919a" stroke="none" stroke-width="2" /><rect x="234" y="1162" width="31" height="23" fill="none" stroke="#d9d9d9" stroke-width="2"/><line x1="249" y1="1162" x2="249" y2="1185" stroke="#d9d9d9" stroke-width="2" /><circle cx="242" cy="1174" r="5" fill="none" stroke="#f2f2f2" stroke-width="2" /><line x1="242" y1="1167" x2="242" y2="1181" stroke="#f2f2f2" stroke-width="2" /><line x1="235" y1="1174" x2="249" y2="1174" stroke="#f2f2f2" stroke-width="2" /><line x1="279" y1="1158" x2="279" y2="1190" stroke="#d9d9d9" stroke-width="2" /><line x1="309" y1="1158" x2="309" y2="1190" stroke="#d9d9d9" stroke-width="2" /><line x1="282" y1="1165" x2="306" y2="1165" stroke="#d9d9d9" stroke-width="2" /><path d="M287,1180 L292,1185 L301,1176" fill="none" stroke="#6fd07f" stroke-width="3" /><line x1="323" y1="1170" x2="333" y2="1159" stroke="#d9d9d9" stroke-width="2" /><line x1="343" y1="1189" x2="353" y2="1178" stroke="#d9d9d9" stroke-width="2" /><line x1="331" y1="1167" x2="345" y2="1181" stroke="#d9d9d9" stroke-width="2" /><polygon points="360,1194 351,1194 360,1185" fill="#8c919a" stroke="none" stroke-width="2" /><rect x="8" y="1208" width="352" height="2.5" fill="#22262e" /><polygon points="9,1229 25,1229 17,1238" fill="#e8e8e8" stroke="none" stroke-width="2" /><g transform="translate(348.3,1233.2)"><rect x="-2.1" y="-9.5" width="4.2" height="5" fill="#f0f0f0" transform="rotate(0)"/><rect x="-2.1" y="-9.5" width="4.2" height="5" fill="#f0f0f0" transform="rotate(45)"/><rect x="-2.1" y="-9.5" width="4.2" height="5" fill="#f0f0f0" transform="rotate(90)"/><rect x="-2.1" y="-9.5" width="4.2" height="5" fill="#f0f0f0" transform="rotate(135)"/><rect x="-2.1" y="-9.5" width="4.2" height="5" fill="#f0f0f0" transform="rotate(180)"/><rect x="-2.1" y="-9.5" width="4.2" height="5" fill="#f0f0f0" transform="rotate(225)"/><rect x="-2.1" y="-9.5" width="4.2" height="5" fill="#f0f0f0" transform="rotate(270)"/><rect x="-2.1" y="-9.5" width="4.2" height="5" fill="#f0f0f0" transform="rotate(315)"/><circle r="6.7" fill="#f0f0f0"/><circle r="2.2" fill="#3b4252"/></g><circle cx="69" cy="1281" r="14" fill="none" stroke="#d9d9d9" stroke-width="2" /><path d="M55,1281 H46 L24,1318" fill="none" stroke="#d9d9d9" stroke-width="2" /><polygon points="20,1325 22,1311 31,1317" fill="#d9d9d9" stroke="none" stroke-width="2" /><circle cx="85" cy="1262" r="10" fill="#f4f4f4" stroke="none" stroke-width="2" /><circle cx="85" cy="1262" r="8" fill="#e8743b" stroke="none" stroke-width="2" /><circle cx="157" cy="1281" r="14" fill="none" stroke="#d9d9d9" stroke-width="2" /><path d="M143,1281 H134 L112,1318" fill="none" stroke="#d9d9d9" stroke-width="2" /><polygon points="108,1325 110,1311 119,1317" fill="#d9d9d9" stroke="none" stroke-width="2" /><g transform="translate(136.3,1327.8) rotate(-38)"><path d="M0,1 Q7.5600000000000005,-1.8 13.860000000000003,-6.300000000000001 Q21.42,-9.0 25.200000000000003,-4.5 L25.200000000000003,4.5 Q17.64,9.0 11.340000000000002,6.75 Q5.040000000000001,4.5 0,1 Z" fill="#d2a874"/><rect x="26.700000000000003" y="-3.825" width="18.299999999999997" height="7.65" fill="#e8e8e8" stroke="#3b4252" stroke-width="0"/></g><line x1="190" y1="1266" x2="206" y2="1266" stroke="#6fd07f" stroke-width="3.5" /><line x1="198" y1="1258" x2="198" y2="1274" stroke="#6fd07f" stroke-width="3.5" /><circle cx="216" cy="1273" r="4" fill="none" stroke="#d9d9d9" stroke-width="1.8" /><path d="M212,1273 H208 L200,1286 M208,1273 L214,1286" fill="none" stroke="#d9d9d9" stroke-width="1.8" /><g transform="translate(197,1290) rotate(120)"><polygon points="0,0 -7,-3.8500000000000005 -7,3.8500000000000005" fill="#d9d9d9"/></g><g transform="translate(216,1290) rotate(60)"><polygon points="0,0 -7,-3.8500000000000005 -7,3.8500000000000005" fill="#d9d9d9"/></g><circle cx="257" cy="1263" r="4" fill="none" stroke="#d9d9d9" stroke-width="1.8" /><circle cx="257" cy="1275" r="4" fill="none" stroke="#d9d9d9" stroke-width="1.8" /><path d="M253,1263 H244 L239,1272 M253,1275 H246 L241,1285" fill="none" stroke="#d9d9d9" stroke-width="1.8" /><line x1="265" y1="1259" x2="265" y2="1290" stroke="#7ec1f6" stroke-width="2" /><g transform="translate(236,1276) rotate(120)"><polygon points="0,0 -7,-3.8500000000000005 -7,3.8500000000000005" fill="#d9d9d9"/></g><g transform="translate(238,1289) rotate(120)"><polygon points="0,0 -7,-3.8500000000000005 -7,3.8500000000000005" fill="#d9d9d9"/></g><circle cx="303" cy="1267" r="5" fill="none" stroke="#d9d9d9" stroke-width="1.8" /><path d="M298,1267 H291 L284,1280" fill="none" stroke="#d9d9d9" stroke-width="1.8" /><g transform="translate(281,1286) rotate(120)"><polygon points="0,0 -7,-3.8500000000000005 -7,3.8500000000000005" fill="#d9d9d9"/></g><polygon points="305,1274 296,1284 302,1284 297,1292 310,1281 304,1281 309,1274" fill="#f6c84e" stroke="none" stroke-width="2" /><line x1="191" y1="1303" x2="204" y2="1315" stroke="#e86060" stroke-width="3.5" /><line x1="204" y1="1303" x2="191" y2="1315" stroke="#e86060" stroke-width="3.5" /><circle cx="216" cy="1317" r="4" fill="none" stroke="#d9d9d9" stroke-width="1.8" /><path d="M212,1317 H208 L200,1330 M208,1317 L214,1330" fill="none" stroke="#d9d9d9" stroke-width="1.8" /><g transform="translate(197,1334) rotate(120)"><polygon points="0,0 -7,-3.8500000000000005 -7,3.8500000000000005" fill="#d9d9d9"/></g><g transform="translate(216,1334) rotate(60)"><polygon points="0,0 -7,-3.8500000000000005 -7,3.8500000000000005" fill="#d9d9d9"/></g><circle cx="259" cy="1309" r="5" fill="none" stroke="#d9d9d9" stroke-width="1.8" /><circle cx="259" cy="1322" r="5" fill="none" stroke="#d9d9d9" stroke-width="1.8" /><path d="M254,1309 H248 L240,1326" fill="none" stroke="#d9d9d9" stroke-width="1.8" /><g transform="translate(237,1332) rotate(120)"><polygon points="0,0 -7,-3.8500000000000005 -7,3.8500000000000005" fill="#d9d9d9"/></g><rect x="8" y="1352" width="352" height="2.5" fill="#22262e" /><polygon points="9,1373 25,1373 17,1382" fill="#e8e8e8" stroke="none" stroke-width="2" /><g transform="translate(348.3,1377.2)"><rect x="-2.1" y="-9.5" width="4.2" height="5" fill="#f0f0f0" transform="rotate(0)"/><rect x="-2.1" y="-9.5" width="4.2" height="5" fill="#f0f0f0" transform="rotate(45)"/><rect x="-2.1" y="-9.5" width="4.2" height="5" fill="#f0f0f0" transform="rotate(90)"/><rect x="-2.1" y="-9.5" width="4.2" height="5" fill="#f0f0f0" transform="rotate(135)"/><rect x="-2.1" y="-9.5" width="4.2" height="5" fill="#f0f0f0" transform="rotate(180)"/><rect x="-2.1" y="-9.5" width="4.2" height="5" fill="#f0f0f0" transform="rotate(225)"/><rect x="-2.1" y="-9.5" width="4.2" height="5" fill="#f0f0f0" transform="rotate(270)"/><rect x="-2.1" y="-9.5" width="4.2" height="5" fill="#f0f0f0" transform="rotate(315)"/><circle r="6.7" fill="#f0f0f0"/><circle r="2.2" fill="#3b4252"/></g><rect x="22" y="1414" width="61" height="53" fill="none" stroke="#d9d9d9" stroke-width="2"/><line x1="22" y1="1430" x2="83" y2="1430" stroke="#d9d9d9" stroke-width="2" /><line x1="22" y1="1442.3333333333333" x2="83" y2="1442.3333333333333" stroke="#d9d9d9" stroke-width="2" /><line x1="22" y1="1454.6666666666667" x2="83" y2="1454.6666666666667" stroke="#d9d9d9" stroke-width="2" /><line x1="42.33333333333333" y1="1430" x2="42.33333333333333" y2="1467" stroke="#d9d9d9" stroke-width="2" /><line x1="62.666666666666664" y1="1430" x2="62.666666666666664" y2="1467" stroke="#d9d9d9" stroke-width="2" /><rect x="109" y="1409" width="54" height="51" fill="none" stroke="#d9d9d9" stroke-width="2"/><line x1="109" y1="1425" x2="163" y2="1425" stroke="#d9d9d9" stroke-width="2" /><line x1="109" y1="1436.6666666666667" x2="163" y2="1436.6666666666667" stroke="#d9d9d9" stroke-width="2" /><line x1="109" y1="1448.3333333333333" x2="163" y2="1448.3333333333333" stroke="#d9d9d9" stroke-width="2" /><line x1="127.0" y1="1425" x2="127.0" y2="1460" stroke="#d9d9d9" stroke-width="2" /><line x1="145.0" y1="1425" x2="145.0" y2="1460" stroke="#d9d9d9" stroke-width="2" /><g transform="translate(136.7,1472) rotate(-41)"><path d="M0,1 Q7.896000000000001,-1.8800000000000001 14.476000000000003,-6.580000000000001 Q22.372000000000003,-9.4 26.320000000000004,-4.7 L26.320000000000004,4.7 Q18.424000000000003,9.4 11.844000000000001,7.05 Q5.264000000000001,4.7 0,1 Z" fill="#d2a874"/><rect x="27.820000000000004" y="-3.995" width="19.179999999999996" height="7.99" fill="#e8e8e8" stroke="#3b4252" stroke-width="0"/></g><polygon points="190,1406 215,1406 222,1413 222,1427 190,1427" fill="#d9d9d9" stroke="none" stroke-width="2" /><rect x="194" y="1411" width="6" height="4" fill="none" stroke="#a0a0a0" stroke-width="1.5"/><rect x="202" y="1411" width="6" height="4" fill="none" stroke="#a0a0a0" stroke-width="1.5"/><rect x="194" y="1417" width="6" height="4" fill="none" stroke="#a0a0a0" stroke-width="1.5"/><rect x="202" y="1417" width="6" height="4" fill="none" stroke="#a0a0a0" stroke-width="1.5"/><rect x="204" y="1418" width="18" height="16" fill="#f2f2f2" /><rect x="204" y="1418" width="18" height="3" fill="#9a9a9a" /><rect x="208" y="1425" width="2" height="2" fill="#555" /><rect x="212" y="1425" width="7" height="2" fill="#555" /><rect x="208" y="1429" width="2" height="2" fill="#555" /><rect x="212" y="1429" width="7" height="2" fill="#555" /><ellipse cx="195" cy="1405.5" rx="3.6" ry="4.8" fill="none" stroke="#3b4252" stroke-width="4"/><ellipse cx="195" cy="1414.5" rx="3.6" ry="4.8" fill="none" stroke="#3b4252" stroke-width="4"/><ellipse cx="195" cy="1405.5" rx="3.6" ry="4.8" fill="none" stroke="#f0a878" stroke-width="2"/><ellipse cx="195" cy="1414.5" rx="3.6" ry="4.8" fill="none" stroke="#f0a878" stroke-width="2"/><polygon points="234,1404 259,1404 266,1411 266,1428 234,1428" fill="#d9d9d9" stroke="none" stroke-width="2" /><rect x="238" y="1409" width="6" height="4" fill="none" stroke="#a0a0a0" stroke-width="1.5"/><rect x="246" y="1409" width="6" height="4" fill="none" stroke="#a0a0a0" stroke-width="1.5"/><rect x="238" y="1415" width="6" height="4" fill="none" stroke="#a0a0a0" stroke-width="1.5"/><rect x="246" y="1415" width="6" height="4" fill="none" stroke="#a0a0a0" stroke-width="1.5"/><ellipse cx="238" cy="1405.5" rx="3.6" ry="4.8" fill="none" stroke="#3b4252" stroke-width="4"/><ellipse cx="238" cy="1414.5" rx="3.6" ry="4.8" fill="none" stroke="#3b4252" stroke-width="4"/><ellipse cx="238" cy="1405.5" rx="3.6" ry="4.8" fill="none" stroke="#f0a878" stroke-width="2"/><ellipse cx="238" cy="1414.5" rx="3.6" ry="4.8" fill="none" stroke="#f0a878" stroke-width="2"/><line x1="260" y1="1416" x2="260" y2="1428" stroke="#3b4252" stroke-width="5" /><line x1="260" y1="1416" x2="260" y2="1428" stroke="#7ec1f6" stroke-width="3" /><polygon points="253,1425 267,1425 260,1434" fill="#7ec1f6" stroke="none" stroke-width="2" /><rect x="190" y="1446" width="18" height="17" fill="#f2f2f2" /><rect x="193" y="1450" width="2" height="2" fill="#3a7fd5" /><rect x="197" y="1450" width="8" height="2" fill="#3a7fd5" /><rect x="193" y="1456" width="2" height="2" fill="#3a7fd5" /><rect x="197" y="1456" width="8" height="2" fill="#3a7fd5" /><rect x="198" y="1460" width="24" height="6" fill="#7ec1f6" /><rect x="198" y="1469" width="24" height="8" fill="#d9d9d9" /><polygon points="234,1455 244,1455 247,1452 266,1460 266,1478 234,1478" fill="#d9d9d9" stroke="none" stroke-width="2" /><rect x="240" y="1462" width="5" height="4" fill="none" stroke="#a0a0a0" stroke-width="1.5"/><rect x="246" y="1462" width="5" height="4" fill="none" stroke="#a0a0a0" stroke-width="1.5"/><rect x="252" y="1462" width="5" height="4" fill="none" stroke="#a0a0a0" stroke-width="1.5"/><rect x="240" y="1468" width="5" height="4" fill="none" stroke="#a0a0a0" stroke-width="1.5"/><rect x="246" y="1468" width="5" height="4" fill="none" stroke="#a0a0a0" stroke-width="1.5"/><rect x="252" y="1468" width="5" height="4" fill="none" stroke="#a0a0a0" stroke-width="1.5"/><ellipse cx="238" cy="1447.5" rx="3.6" ry="4.8" fill="none" stroke="#3b4252" stroke-width="4"/><ellipse cx="238" cy="1456.5" rx="3.6" ry="4.8" fill="none" stroke="#3b4252" stroke-width="4"/><ellipse cx="238" cy="1447.5" rx="3.6" ry="4.8" fill="none" stroke="#f0a878" stroke-width="2"/><ellipse cx="238" cy="1456.5" rx="3.6" ry="4.8" fill="none" stroke="#f0a878" stroke-width="2"/><circle cx="257" cy="1454" r="9.5" fill="#3b4252" stroke="none" stroke-width="2" /><path d="M250.9,1451.8 A6.5,6.5 0 0 1 262.6,1450.8" fill="none" stroke="#6fd07f" stroke-width="2.2"/><path d="M263.1,1456.2 A6.5,6.5 0 0 1 251.4,1457.2" fill="none" stroke="#6fd07f" stroke-width="2.2"/><polygon points="266.6,1449.8 259.6,1447.2 263.6,1455.2" fill="#6fd07f"/><polygon points="247.4,1458.2 254.4,1460.8 250.4,1452.8" fill="#6fd07f"/><rect x="8" y="1496" width="352" height="2.5" fill="#22262e" /><clipPath id="pclip"><rect x="0" y="1500" width="368" height="16"/></clipPath><g clip-path="url(#pclip)"><polygon points="9,1517 25,1517 17,1526" fill="#e8e8e8"/></g><g clip-path="url(#pclip)"><g transform="translate(348.3,1521.2)"><rect x="-2.1" y="-9.5" width="4.2" height="5" fill="#f0f0f0" transform="rotate(0)"/><rect x="-2.1" y="-9.5" width="4.2" height="5" fill="#f0f0f0" transform="rotate(45)"/><rect x="-2.1" y="-9.5" width="4.2" height="5" fill="#f0f0f0" transform="rotate(90)"/><rect x="-2.1" y="-9.5" width="4.2" height="5" fill="#f0f0f0" transform="rotate(135)"/><rect x="-2.1" y="-9.5" width="4.2" height="5" fill="#f0f0f0" transform="rotate(180)"/><rect x="-2.1" y="-9.5" width="4.2" height="5" fill="#f0f0f0" transform="rotate(225)"/><rect x="-2.1" y="-9.5" width="4.2" height="5" fill="#f0f0f0" transform="rotate(270)"/><rect x="-2.1" y="-9.5" width="4.2" height="5" fill="#f0f0f0" transform="rotate(315)"/><circle r="6.7" fill="#f0f0f0"/></g></g><rect x="0" y="1516" width="368" height="46" fill="#3b4252" /><line x1="31" y1="1542" x2="53" y2="1542" stroke="#d9d9d9" stroke-width="2" /><line x1="42" y1="1531" x2="42" y2="1553" stroke="#d9d9d9" stroke-width="2" /><line x1="93" y1="1533" x2="114" y2="1533" stroke="#d9d9d9" stroke-width="2" /><line x1="93" y1="1539" x2="114" y2="1539" stroke="#d9d9d9" stroke-width="2" /><rect x="88" y="1543" width="18" height="3" fill="#d9d9d9" /><polygon points="108,1546 114,1546 111,1542" fill="#d9d9d9" stroke="none" stroke-width="2" /><line x1="93" y1="1551" x2="114" y2="1551" stroke="#d9d9d9" stroke-width="2" /><rect x="2408" y="158" width="472" height="1358" fill="#3b4252" /><defs><linearGradient id="ptab" x1="0" y1="0" x2="0" y2="1"><stop offset="0" stop-color="#3f4859"/><stop offset="1" stop-color="#3b4353"/></linearGradient></defs><rect x="2408" y="158" width="103" height="45" fill="url(#ptab)" /><rect x="2511" y="158" width="320" height="45" fill="#2c313c" /><rect x="2511" y="201" width="320" height="2" fill="#22262e" /><rect x="2511" y="158" width="1.6" height="45" fill="#22262e" /><rect x="2616" y="158" width="1.6" height="45" fill="#22262e" /><rect x="2721" y="158" width="1.6" height="45" fill="#22262e" /><rect x="2830" y="158" width="1.6" height="45" fill="#22262e" /><rect x="2831.5" y="158" width="49" height="45" fill="#394150" /><polygon points="2444,192 2453,185 2471,185 2462,192" fill="#d9d9d9" stroke="#3b4252" stroke-width="1.2" /><polygon points="2444,184 2453,177 2471,177 2462,184" fill="#d9d9d9" stroke="#3b4252" stroke-width="1.2" /><polygon points="2444,176 2453,169 2471,169 2462,176" fill="#d9d9d9" stroke="#3b4252" stroke-width="1.2" /><circle cx="2470" cy="189" r="8" fill="#d9d9d9" stroke="#3b4252" stroke-width="1.5" /><rect x="2468.8" y="187" width="2.6" height="7" fill="#3b4252" /><circle cx="2470.1" cy="183.8" r="1.5" fill="#3b4252" stroke="none" stroke-width="2" /><polygon points="2551,170 2572,170 2581,178 2581,192 2551,192" fill="#d9d9d9" stroke="none" stroke-width="2" /><polygon points="2573,170 2581,177.5 2573,177.5" fill="#f2f2f2" stroke="none" stroke-width="2" /><path d="M2572,170 V178.5 H2581" fill="none" stroke="#2c313c" stroke-width="1.5" /><path d="M2560,177 V168 A4.5,4.5 0 0 0 2551,168 V180 A3.5,3.5 0 0 0 2558,180 V170" fill="none" stroke="#2c313c" stroke-width="5.5" /><path d="M2560,177 V168 A4.5,4.5 0 0 0 2551,168 V180 A3.5,3.5 0 0 0 2558,180 V170" fill="none" stroke="#d9d9d9" stroke-width="2.2" /><rect x="2657" y="167" width="27" height="26" fill="#d9d9d9" /><rect x="2657" y="167" width="27" height="4" fill="#a8a8a8" /><rect x="2659" y="168" width="3" height="2" fill="#2c313c" /><rect x="2661" y="174" width="5" height="5" fill="#2c313c" /><rect x="2668" y="174" width="5" height="5" fill="#8f8f8f" /><rect x="2675" y="174" width="5" height="5" fill="#8f8f8f" /><rect x="2661" y="181" width="5" height="5" fill="#2c313c" /><rect x="2668" y="181" width="5" height="5" fill="#8f8f8f" /><rect x="2675" y="181" width="5" height="5" fill="#8f8f8f" /><rect x="2661" y="188" width="20" height="2" fill="#8f8f8f" /><path d="M2849,175 L2855,180 L2849,185 M2856,175 L2862,180 L2856,185" fill="none" stroke="#a9acb3" stroke-width="1.6" /><rect x="2836" y="206" width="17" height="24" fill="none" stroke="#d8d8d8" stroke-width="2"/><line x1="2846" y1="206" x2="2846" y2="230" stroke="#d9d9d9" stroke-width="2" /><line x1="2831" y1="218" x2="2843" y2="218" stroke="#7ec1f6" stroke-width="2" /><polygon points="2833,214 2833,222 2827,218" fill="#7ec1f6" stroke="none" stroke-width="2" /><polygon points="2436,300 2449,292 2467,292 2454,300" fill="#d9d9d9" stroke="#3b4252" stroke-width="1.2" /><polygon points="2436,294 2449,286 2467,286 2454,294" fill="#d9d9d9" stroke="#3b4252" stroke-width="1.2" /><polygon points="2436,288 2449,280 2467,280 2454,288" fill="#7ec1f6" stroke="#3b4252" stroke-width="1.2" /><circle cx="2453" cy="276" r="6.5" fill="#d9d9d9" stroke="#3b4252" stroke-width="1.4" /><polygon points="2484,293 2496,285 2511,285 2499,293" fill="#d9d9d9" stroke="#3b4252" stroke-width="1.2" /><polygon points="2484,287 2496,279 2511,279 2499,287" fill="#d9d9d9" stroke="#3b4252" stroke-width="1.2" /><polygon points="2484,281 2496,273 2511,273 2499,281" fill="#d9d9d9" stroke="#3b4252" stroke-width="1.2" /><g transform="translate(2511,293) rotate(30)"><rect x="-5" y="-10" width="10" height="9" fill="#e8e8e8" stroke="#3b4252" stroke-width="1.5"/><rect x="-2" y="-13" width="4" height="4" fill="#e8e8e8"/><rect x="-5.5" y="-1" width="11" height="9" fill="#f6d27e" stroke="#3b4252" stroke-width="1.5"/></g><polygon points="2536,299 2548,291 2563,291 2551,299" fill="#d9d9d9" stroke="#3b4252" stroke-width="1.2" /><polygon points="2536,293 2548,285 2563,285 2551,293" fill="#d9d9d9" stroke="#3b4252" stroke-width="1.2" /><polygon points="2536,287 2548,279 2563,279 2551,287" fill="#d9d9d9" stroke="#3b4252" stroke-width="1.2" /><path d="M2556,285 Q2555,276 2545,276" fill="none" stroke="#3b4252" stroke-width="5" /><path d="M2556,285 Q2555,276 2545,276" fill="none" stroke="#7ec1f6" stroke-width="2.8" /><polygon points="2538,276 2546,270 2546,282" fill="#7ec1f6" stroke="none" stroke-width="2" /><polygon points="2582,293 2594,285 2609,285 2597,293" fill="#7ec1f6" stroke="#3b4252" stroke-width="1.2" /><polygon points="2582,287 2594,279 2609,279 2597,287" fill="#d9d9d9" stroke="#3b4252" stroke-width="1.2" /><polygon points="2582,281 2594,273 2609,273 2597,281" fill="#d9d9d9" stroke="#3b4252" stroke-width="1.2" /><line x1="2607" y1="288" x2="2597" y2="298" stroke="#3b4252" stroke-width="5" /><line x1="2607" y1="288" x2="2597" y2="298" stroke="#f2f2f2" stroke-width="2.2" /><polygon points="2594,301 2595,292 2603,300" fill="#f2f2f2" stroke="none" stroke-width="2" /><polygon points="2630,293 2642,285 2657,285 2645,293" fill="#7ec1f6" stroke="#3b4252" stroke-width="1.2" /><polygon points="2630,287 2642,279 2657,279 2645,287" fill="#d9d9d9" stroke="#3b4252" stroke-width="1.2" /><polygon points="2630,281 2642,273 2657,273 2645,281" fill="#d9d9d9" stroke="#3b4252" stroke-width="1.2" /><line x1="2646" y1="299" x2="2657" y2="288" stroke="#3b4252" stroke-width="5" /><line x1="2646" y1="299" x2="2657" y2="288" stroke="#f2f2f2" stroke-width="2.2" /><polygon points="2660,285 2659,294 2651,286" fill="#f2f2f2" stroke="none" stroke-width="2" /><polygon points="2676,283 2687,271 2704,271 2693,283" fill="#d9d9d9" stroke="#3b4252" stroke-width="1.6" /><g stroke="#8ad8e0" stroke-width="2"><g transform="rotate(0 2699 290)"><line x1="2699" y1="281" x2="2699" y2="299"/><path d="M2696,281 L2699,284 L2702,281 M2696,299 L2699,296 L2702,299" fill="none"/></g><g transform="rotate(60 2699 290)"><line x1="2699" y1="281" x2="2699" y2="299"/><path d="M2696,281 L2699,284 L2702,281 M2696,299 L2699,296 L2702,299" fill="none"/></g><g transform="rotate(120 2699 290)"><line x1="2699" y1="281" x2="2699" y2="299"/><path d="M2696,281 L2699,284 L2702,281 M2696,299 L2699,296 L2702,299" fill="none"/></g></g><circle cx="2699" cy="290" r="3" fill="none" stroke="#8ad8e0" stroke-width="1.6" /><polygon points="2724,283 2735,271 2752,271 2741,283" fill="#d9d9d9" stroke="#3b4252" stroke-width="1.6" /><circle cx="2749" cy="286" r="7" fill="#8ad8e0" stroke="#3b4252" stroke-width="1.5" /><rect x="2745.5" y="292" width="7" height="5" fill="#f2f2f2" /><polygon points="2772,283 2783,271 2800,271 2789,283" fill="#d9d9d9" stroke="#3b4252" stroke-width="1.6" /><path d="M2792,288 V283 A5,5 0 0 1 2802,283 V288" fill="none" stroke="#8ad8e0" stroke-width="2.4" /><rect x="2789" y="287" width="16" height="11" fill="#8ad8e0" /><rect x="2796" y="290" width="2" height="4" fill="#3b4252" /><polygon points="2820,283 2831,271 2848,271 2837,283" fill="#d9d9d9" stroke="#3b4252" stroke-width="1.6" /><path d="M2845,288 V283 A5,5 0 0 1 2855,283 V286" fill="none" stroke="#f6d27e" stroke-width="2.4" /><rect x="2833" y="287" width="16" height="11" fill="#f6d27e" /><rect x="2840" y="290" width="2" height="4" fill="#3b4252" /><defs><linearGradient id="dd" x1="0" y1="0" x2="0" y2="1"><stop offset="0" stop-color="#4f5a6e"/><stop offset="1" stop-color="#4b5669"/></linearGradient></defs><rect x="2428" y="323" width="436" height="51" rx="5" fill="url(#dd)" stroke="#2a3a36" stroke-width="2"/><circle cx="2456" cy="348" r="8" fill="#d9d9d9" stroke="none" stroke-width="2" /><rect x="2483" y="348" width="10" height="9" fill="#6b7484" /><path d="M2485,348 V344 A3,3 0 0 1 2491,344 V348" fill="none" stroke="#6b7484" stroke-width="2" /><g stroke="#6b7484" stroke-width="1.8" fill="none"><g transform="rotate(0 2524 348)"><line x1="2524" y1="340" x2="2524" y2="356"/><path d="M2521.5,340.5 L2524,343 L2526.5,340.5 M2521.5,355.5 L2524,353 L2526.5,355.5"/></g><g transform="rotate(60 2524 348)"><line x1="2524" y1="340" x2="2524" y2="356"/><path d="M2521.5,340.5 L2524,343 L2526.5,340.5 M2521.5,355.5 L2524,353 L2526.5,355.5"/></g><g transform="rotate(120 2524 348)"><line x1="2524" y1="340" x2="2524" y2="356"/><path d="M2521.5,340.5 L2524,343 L2526.5,340.5 M2521.5,355.5 L2524,353 L2526.5,355.5"/></g><circle cx="2524" cy="348" r="2.5"/></g><rect x="2548" y="340" width="16" height="16" fill="#ffffff" stroke="#000" stroke-width="2.5"/><path d="M2592,355 H2578 V342 H2594 V348" fill="none" stroke="#6b7484" stroke-width="2" /><circle cx="2594" cy="354" r="5" fill="none" stroke="#6b7484" stroke-width="1.6" /><polygon points="2841,344 2855,344 2848,352" fill="#d8d8d8" stroke="none" stroke-width="2" /><rect x="2429" y="380" width="433" height="50" rx="5" fill="url(#dd)" stroke="#2a3a36" stroke-width="2"/><polygon points="2840,400 2854,400 2847,408" fill="#d8d8d8" stroke="none" stroke-width="2" /><path d="M2437,451 L2444,458 L2451,451" fill="none" stroke="#c8c8c8" stroke-width="2.5" /><rect x="2428" y="486" width="432" height="922" fill="#323844" /><rect x="2429" y="487" width="430" height="920" fill="#394250" /><rect x="2430" y="486" width="430" height="890" fill="#2a2f3a" /><rect x="2432" y="488" width="426" height="886" fill="#4e586b" /><defs><linearGradient id="lg" x1="0" y1="0" x2="1" y2="1"><stop offset="0" stop-color="#515b6e"/><stop offset="1" stop-color="#4c566a"/></linearGradient></defs><rect x="2432" y="536" width="426" height="838" fill="url(#lg)" /><rect x="2430" y="488" width="428" height="48" fill="#2e333f" /><rect x="2494" y="488" width="1.5" height="48" fill="#262a33" /><rect x="2611" y="488" width="1.5" height="48" fill="#262a33" /><rect x="2655" y="488" width="1.5" height="48" fill="#262a33" /><rect x="2699" y="488" width="1.5" height="48" fill="#262a33" /><rect x="2792" y="488" width="1.5" height="48" fill="#262a33" /><path d="M2451,512 Q2462,501 2473,512 Q2462,523 2451,512 Z" fill="#d8d8d8"/><circle cx="2462" cy="512" r="4" fill="#2e333f" stroke="none" stroke-width="2" /><circle cx="2462" cy="512" r="2" fill="#d8d8d8" stroke="none" stroke-width="2" /><rect x="2504" y="504" width="14" height="15" fill="none" stroke="#d8d8d8" stroke-width="2"/><polygon points="2504,519 2518,504 2518,519" fill="#d8d8d8" stroke="none" stroke-width="2" /><polygon points="2591,506 2597,506 2594,502" fill="#d9d9d9" stroke="none" stroke-width="2" /><polygon points="2591,515 2597,515 2594,519" fill="#d9d9d9" stroke="none" stroke-width="2" /><rect x="2591" y="506" width="6" height="1" fill="#2e333f" /><g stroke="#d8d8d8" stroke-width="1.8" fill="none"><g transform="rotate(0 2632 511)"><line x1="2632" y1="502" x2="2632" y2="520"/><path d="M2629.5,502.5 L2632,505 L2634.5,502.5 M2629.5,519.5 L2632,517 L2634.5,519.5"/></g><g transform="rotate(60 2632 511)"><line x1="2632" y1="502" x2="2632" y2="520"/><path d="M2629.5,502.5 L2632,505 L2634.5,502.5 M2629.5,519.5 L2632,517 L2634.5,519.5"/></g><g transform="rotate(120 2632 511)"><line x1="2632" y1="502" x2="2632" y2="520"/><path d="M2629.5,502.5 L2632,505 L2634.5,502.5 M2629.5,519.5 L2632,517 L2634.5,519.5"/></g><circle cx="2632" cy="511" r="3"/></g><rect x="2669" y="509" width="14" height="12" fill="#d8d8d8" /><path d="M2671,509 V505 A5,5 0 0 1 2681,505 V509" fill="none" stroke="#d8d8d8" stroke-width="2.2" /><rect x="2675" y="512" width="2" height="5" fill="#2e333f" /><rect x="2735" y="505" width="19" height="3" fill="#d9d9d9" /><rect x="2735" y="511" width="19" height="3" fill="#d9d9d9" /><rect x="2735" y="517" width="19" height="3" fill="#d9d9d9" /><line x1="2829" y1="505" x2="2848" y2="505" stroke="#d9d9d9" stroke-width="2.2" stroke-dasharray="3 2"/><line x1="2829" y1="511" x2="2848" y2="511" stroke="#d9d9d9" stroke-width="2.2" stroke-dasharray="19"/><line x1="2829" y1="517" x2="2848" y2="517" stroke="#d9d9d9" stroke-width="2.2" stroke-dasharray="19"/><line x1="2829" y1="511" x2="2848" y2="511" stroke="#d9d9d9" stroke-width="2.2" stroke-dasharray="6 2"/><circle cx="2468" cy="555" r="8" fill="#dcdcdc" stroke="none" stroke-width="2" /><rect x="2495" y="547" width="16" height="16" fill="#f39a3a" stroke="#000" stroke-width="2.4"/><rect x="2808" y="554" width="50" height="2" fill="#f0f0f0" /><rect x="2434" y="574" width="424" height="38" fill="#3b7fb4" /><circle cx="2468" cy="593" r="8" fill="#dcdcdc" stroke="none" stroke-width="2" /><rect x="2495" y="585" width="16" height="16" fill="#ffffff" stroke="#000" stroke-width="2.4"/><rect x="2808" y="592" width="50" height="2" fill="#f0f0f0" /><circle cx="2468" cy="631" r="8" fill="#dcdcdc" stroke="none" stroke-width="2" /><rect x="2495" y="623" width="16" height="16" fill="#ef3e26" stroke="#000" stroke-width="2.4"/><rect x="2808" y="630" width="50" height="2" fill="#f0f0f0" /><circle cx="2468" cy="669" r="8" fill="#dcdcdc" stroke="none" stroke-width="2" /><rect x="2495" y="661" width="16" height="16" fill="#ffffff" stroke="#000" stroke-width="2.4"/><rect x="2808" y="668" width="50" height="2" fill="#f0f0f0" /><circle cx="2468" cy="707" r="8" fill="#dcdcdc" stroke="none" stroke-width="2" /><rect x="2495" y="699" width="16" height="16" fill="#5ff5ff" stroke="#000" stroke-width="2.4"/><rect x="2808" y="706" width="50" height="2" fill="#f0f0f0" /><circle cx="2468" cy="745" r="8" fill="#dcdcdc" stroke="none" stroke-width="2" /><rect x="2495" y="737" width="16" height="16" fill="#f04ff0" stroke="#000" stroke-width="2.4"/><rect x="2808" y="744" width="50" height="2" fill="#f0f0f0" /><circle cx="2468" cy="783" r="8" fill="#dcdcdc" stroke="none" stroke-width="2" /><rect x="2495" y="775" width="16" height="16" fill="#5ff04a" stroke="#000" stroke-width="2.4"/><rect x="2808" y="782" width="50" height="2" fill="#f0f0f0" /><rect x="2434" y="1388" width="168" height="10" rx="5" fill="#8a929e"/><g fill="none" stroke="#d8d8d8" stroke-width="2"><path d="M2456,1421 H2470 L2462,1430 H2448 Z"/></g><path d="M2448,1434 H2462 L2470,1425 M2446,1441 H2460 L2468,1432" fill="none" stroke="#b8b8b8" stroke-width="2" /><g fill="none" stroke="#d8d8d8" stroke-width="2"><path d="M2514,1419 H2526 L2518,1427 H2506 Z"/></g><path d="M2506,1431 H2518 L2524,1425 M2506,1437 H2515" fill="none" stroke="#a0a0a0" stroke-width="2" /><rect x="2515" y="1431" width="18" height="15" fill="#f2f2f2" /><rect x="2515" y="1431" width="18" height="3" fill="#9a9a9a" /><rect x="2518" y="1437" width="2" height="2" fill="#555" /><rect x="2522" y="1437" width="8" height="2" fill="#555" /><rect x="2518" y="1441" width="2" height="2" fill="#555" /><rect x="2522" y="1441" width="8" height="2" fill="#555" /><polygon points="2565,1422 2575,1422 2579,1426 2586,1426 2586,1430 2570,1430 2566,1441" fill="#d9d9d9" stroke="none" stroke-width="2" /><polygon points="2570,1432 2591,1432 2586,1442 2566,1442" fill="#d9d9d9" stroke="none" stroke-width="2" /><polygon points="2625,1422 2635,1422 2639,1426 2646,1426 2646,1430 2630,1430 2626,1441" fill="#d9d9d9" stroke="none" stroke-width="2" /><polygon points="2630,1432 2651,1432 2646,1442 2626,1442" fill="#d9d9d9" stroke="none" stroke-width="2" /><polygon points="2641,1433 2636,1438 2639,1438 2636,1442 2642,1437 2639,1437" fill="#3b4252" stroke="none" stroke-width="2" /><rect x="2762" y="1431" width="16" height="3" fill="#8a929e" /><rect x="2812" y="1425" width="20" height="15" fill="none" stroke="#d8d8d8" stroke-width="2"/><line x1="2819" y1="1425" x2="2819" y2="1440" stroke="#d9d9d9" stroke-width="2" /><line x1="2825" y1="1425" x2="2825" y2="1440" stroke="#d9d9d9" stroke-width="2" /><polygon points="2838,1431 2848,1431 2843,1436" fill="#d9d9d9" stroke="none" stroke-width="2" /><rect x="2430" y="1458" width="428" height="40" rx="9" fill="#ffffff"/><circle cx="2450" cy="1476" r="7" fill="none" stroke="#111" stroke-width="2" /><line x1="2455" y1="1481" x2="2461" y2="1487" stroke="#111" stroke-width="2.5" /><path d="M2464,1475 L2468,1479 L2473,1474" fill="none" stroke="#111" stroke-width="2" /><rect x="368" y="1516" width="2512" height="46" fill="#394150" /><rect x="368" y="1516" width="2512" height="1.5" fill="#22262e" /><rect x="368" y="1517" width="1" height="45" fill="#22262e" /><defs><linearGradient id="tabg" x1="0" y1="0" x2="0" y2="1"><stop offset="0" stop-color="#3c4557"/><stop offset="1" stop-color="#343c4b"/></linearGradient><linearGradient id="tabh" x1="0" y1="0" x2="1" y2="1"><stop offset="0" stop-color="#4a566a"/><stop offset="1" stop-color="#46526a"/></linearGradient></defs><rect x="369" y="1518" width="402" height="44" fill="url(#tabg)" /><rect x="535" y="1518" width="117" height="44" fill="url(#tabh)" /><rect x="368" y="1516" width="412" height="2" fill="#22262e" /><rect x="488" y="1517" width="1.5" height="45" fill="#22262e" /><rect x="534" y="1517" width="1.5" height="45" fill="#22262e" /><rect x="652" y="1517" width="1.5" height="45" fill="#22262e" /><rect x="771" y="1517" width="1.5" height="45" fill="#22262e" /><line x1="500" y1="1540" x2="522" y2="1540" stroke="#d0d0d0" stroke-width="2" /><line x1="511" y1="1529" x2="511" y2="1551" stroke="#d0d0d0" stroke-width="2" /><rect x="1906" y="1517" width="1.5" height="45" fill="#22262e" /><rect x="2186" y="1525" width="32" height="30" fill="#c8c8c8" /><polygon points="2189,1528 2189,1551 2205,1551" fill="#222" stroke="none" stroke-width="2" /><rect x="2201" y="1530" width="5" height="5" fill="#8a8a8a" /><rect x="2201" y="1537" width="5" height="5" fill="#8a8a8a" /><rect x="2201" y="1544" width="5" height="5" fill="#8a8a8a" /><rect x="2208" y="1530" width="5" height="5" fill="#8a8a8a" /><rect x="2208" y="1537" width="5" height="5" fill="#8a8a8a" /><rect x="2208" y="1544" width="5" height="5" fill="#8a8a8a" /><rect x="2226" y="1520" width="40" height="39" fill="#5f84b4" /><path d="M2232,1524 V1555 H2262" fill="none" stroke="#f2f2f2" stroke-width="2" /><rect x="2234" y="1545" width="8" height="8" fill="none" stroke="#f2f2f2" stroke-width="1.8"/><circle cx="2287" cy="1543" r="12" fill="none" stroke="#d9d9d9" stroke-width="2" /><line x1="2284" y1="1540" x2="2302" y2="1526" stroke="#d9d9d9" stroke-width="2" /><line x1="2284" y1="1540" x2="2306" y2="1540" stroke="#d9d9d9" stroke-width="2" /><line x1="2319" y1="1533" x2="2331" y2="1533" stroke="#d9d9d9" stroke-width="2" /><line x1="2325" y1="1527" x2="2325" y2="1539" stroke="#d9d9d9" stroke-width="2" /><rect x="2331" y="1543" width="19" height="9" fill="#d9d9d9" /><rect x="2334" y="1545" width="2" height="5" fill="#3b4252" /><rect x="2362" y="1526" width="32" height="4" fill="#d9d9d9" /><rect x="2362" y="1534" width="32" height="4" fill="#d9d9d9" /><rect x="2362" y="1542" width="18" height="4" fill="#d9d9d9" /><rect x="2362" y="1549" width="15" height="5" fill="#d9d9d9" /><rect x="2402" y="1520" width="40" height="39" fill="#5f84b4" /><rect x="2446" y="1520" width="40" height="39" fill="#5f84b4" /><rect x="2490" y="1520" width="40" height="39" fill="#5f84b4" /><rect x="2534" y="1520" width="40" height="39" fill="#5f84b4" /><rect x="2409" y="1526" width="26" height="26" fill="none" stroke="#f2f2f2" stroke-width="2"/><rect x="2411.0" y="1528.0" width="4.6" height="4.6" fill="#f2f2f2" /><rect x="2411.0" y="1537.2" width="4.6" height="4.6" fill="#f2f2f2" /><rect x="2411.0" y="1546.4" width="4.6" height="4.6" fill="#f2f2f2" /><rect x="2415.6" y="1532.6" width="4.6" height="4.6" fill="#f2f2f2" /><rect x="2415.6" y="1541.8" width="4.6" height="4.6" fill="#f2f2f2" /><rect x="2420.2" y="1528.0" width="4.6" height="4.6" fill="#f2f2f2" /><rect x="2420.2" y="1537.2" width="4.6" height="4.6" fill="#f2f2f2" /><rect x="2420.2" y="1546.4" width="4.6" height="4.6" fill="#f2f2f2" /><rect x="2424.8" y="1532.6" width="4.6" height="4.6" fill="#f2f2f2" /><rect x="2424.8" y="1541.8" width="4.6" height="4.6" fill="#f2f2f2" /><rect x="2429.4" y="1528.0" width="4.6" height="4.6" fill="#f2f2f2" /><rect x="2429.4" y="1537.2" width="4.6" height="4.6" fill="#f2f2f2" /><rect x="2429.4" y="1546.4" width="4.6" height="4.6" fill="#f2f2f2" /><path d="M2456,1547 V1526 H2461 M2476,1526 H2481 V1547" fill="none" stroke="#f2f2f2" stroke-width="2" /><rect x="2462" y="1528" width="10" height="6" fill="#8fb0dc" stroke="#f2f2f2" stroke-width="1"/><circle cx="2467" cy="1542" r="5" fill="#b8c8e0" stroke="none" stroke-width="2" /><polygon points="2473,1541 2486,1552 2480,1552 2483,1558 2476,1556" fill="#f2f2f2" stroke="none" stroke-width="2" /><path d="M2496,1553 L2516,1532 M2496,1553 H2526" fill="none" stroke="#f2f2f2" stroke-width="2.2" /><circle cx="2505" cy="1543" r="3" fill="#f2f2f2" stroke="none" stroke-width="2" /><rect x="2540" y="1525" width="10" height="10" fill="none" stroke="#f2f2f2" stroke-width="2"/><path d="M2554,1530 H2570 V1555 H2545 V1539" fill="none" stroke="#f2f2f2" stroke-width="2.2" /><polygon points="2603,1528 2590,1539 2603,1550" fill="#8a929e" stroke="none" stroke-width="2" /><polygon points="2668,1528 2681,1539 2668,1550" fill="#8a929e" stroke="none" stroke-width="2" /><rect x="2621" y="1526" width="31" height="29" fill="none" stroke="#d8d8d8" stroke-width="2" stroke-dasharray="5 3"/><rect x="2629" y="1538" width="14" height="13" fill="none" stroke="#d8d8d8" stroke-width="2.2"/><line x1="2622" y1="1527" x2="2631" y2="1536" stroke="#d9d9d9" stroke-width="2" /><polygon points="2620,1525 2628,1525 2620,1533" fill="#d9d9d9" stroke="none" stroke-width="2" /><polygon points="2717,1525 2733,1555 2717,1545 2702,1555" fill="#d9d9d9" stroke="none" stroke-width="2" /><circle cx="2728" cy="1532" r="5" fill="none" stroke="#d9d9d9" stroke-width="2" /><polygon points="2760,1525 2776,1555 2760,1545 2745,1555" fill="#d9d9d9" stroke="none" stroke-width="2" /><polygon points="2775,1525 2767,1535 2771,1535 2766,1542 2776,1532 2772,1532" fill="#d9d9d9" stroke="none" stroke-width="2" /><rect x="2791" y="1525" width="12" height="12" fill="none" stroke="#d8d8d8" stroke-width="2"/><circle cx="2815" cy="1539" r="6" fill="none" stroke="#d9d9d9" stroke-width="2" /><polygon points="2800,1554 2812,1554 2806,1543" fill="none" stroke="#d9d9d9" stroke-width="2" /><g transform="translate(2850,1540)"><rect x="-3" y="-15" width="6" height="7" fill="#d8d8d8" transform="rotate(0)"/><rect x="-3" y="-15" width="6" height="7" fill="#d8d8d8" transform="rotate(45)"/><rect x="-3" y="-15" width="6" height="7" fill="#d8d8d8" transform="rotate(90)"/><rect x="-3" y="-15" width="6" height="7" fill="#d8d8d8" transform="rotate(135)"/><rect x="-3" y="-15" width="6" height="7" fill="#d8d8d8" transform="rotate(180)"/><rect x="-3" y="-15" width="6" height="7" fill="#d8d8d8" transform="rotate(225)"/><rect x="-3" y="-15" width="6" height="7" fill="#d8d8d8" transform="rotate(270)"/><rect x="-3" y="-15" width="6" height="7" fill="#d8d8d8" transform="rotate(315)"/><circle r="10" fill="#d8d8d8"/><circle r="4.5" fill="#3b4252"/></g><rect x="0" y="0" width="2880" height="110" fill="#3b4353" /><rect x="0" y="110" width="2880" height="2" fill="#262a33" /><circle cx="28" cy="26" r="12" fill="#ed6a5e" stroke="none" stroke-width="2" /><circle cx="28" cy="26" r="3.5" fill="#6b0f0a" stroke="none" stroke-width="2" /><circle cx="68" cy="26" r="12" fill="#f5bf4f" stroke="none" stroke-width="2" /><circle cx="108" cy="26" r="12" fill="#61c554" stroke="none" stroke-width="2" /><rect x="1164" y="8" width="28" height="32" fill="#3b5a8a" /><polygon points="1164,30 1192,40 1164,40" fill="#9c8450" stroke="none" stroke-width="2" /><polygon points="1164,27 1192,35 1192,40 1164,40" fill="#8f7a48" stroke="none" stroke-width="2" /><polygon points="1186,8 1192,14 1186,14" fill="#8aa0c0" stroke="none" stroke-width="2" /><line x1="1175" y1="8" x2="1175" y2="30" stroke="#8aa0c0" stroke-width="1.5" /><line x1="1164" y1="18" x2="1192" y2="18" stroke="#8aa0c0" stroke-width="1.5" /><circle cx="1175" cy="18" r="3" fill="none" stroke="#c0d0e0" stroke-width="1.2" /><path d="M2641,0 H2862 A18,18 0 0 1 2880,18 V41 H2641 Z" fill="#4b5569"/><rect x="2640" y="0" width="2" height="42" fill="#262a33" /><rect x="2640" y="40" width="240" height="2" fill="#262a33" /><circle cx="2666" cy="16" r="6" fill="none" stroke="#e8e8e8" stroke-width="2" /><path d="M2654,32 Q2654,22 2666,22 Q2678,22 2678,32" fill="none" stroke="#e8e8e8" stroke-width="2" /><polygon points="2862,15 2874,15 2868,22" fill="#d8d8d8" stroke="none" stroke-width="2" /><polygon points="272,65 294,65 304,74 304,89 272,89" fill="#d9d9d9" stroke="none" stroke-width="2" /><polygon points="295,65 304,74 295,74" fill="#f2f2f2" stroke="none" stroke-width="2" /><line x1="294.5" y1="65" x2="294.5" y2="74.5" stroke="#3b4252" stroke-width="1.5" /><line x1="294" y1="74.5" x2="304" y2="74.5" stroke="#3b4252" stroke-width="1.5" /><polygon points="338,65 349,65 353,69 363,69 363,72 348,72 339,88" fill="#d9d9d9" stroke="none" stroke-width="2" /><polygon points="348,73 370,73 362,89 339,89" fill="#d9d9d9" stroke="none" stroke-width="2" /><polygon points="405,62 435,62 435,91 408,91 405,88" fill="#bdbdbd" stroke="none" stroke-width="2" /><rect x="412" y="62" width="16" height="11" fill="#f2f2f2" /><rect x="411" y="73" width="18" height="1.5" fill="#3b4252" /><rect x="412" y="82" width="16" height="9" fill="#f2f2f2" /><rect x="411" y="81" width="18" height="1.5" fill="#3b4252" /><rect x="415" y="84" width="2" height="5" fill="#3b4252" /><polygon points="470,61 500,61 500,90 473,90 470,87" fill="#bdbdbd" stroke="none" stroke-width="2" /><rect x="477" y="61" width="16" height="11" fill="#f2f2f2" /><rect x="476" y="72" width="18" height="1.5" fill="#3b4252" /><rect x="477" y="81" width="16" height="9" fill="#f2f2f2" /><rect x="476" y="80" width="18" height="1.5" fill="#3b4252" /><rect x="480" y="83" width="2" height="5" fill="#3b4252" /><g transform="translate(493,85) rotate(45)"><rect x="-3.5" y="-11" width="7" height="15" fill="#f6d27e" stroke="#3b4353" stroke-width="1.5"/><path d="M-3.5,-11 A3.5,3.5 0 0 1 3.5,-11 Z" fill="#e86060"/><polygon points="-3.5,4 3.5,4 0,10" fill="#c8c8c8" stroke="#3b4353" stroke-width="1"/></g><path d="M610,77 L626,68 L626,73 Q640,74 643,86 Q636,80 626,81 L626,86 Z" fill="#d9d9d9" stroke="none" stroke-width="2" /><path d="M708,77 L692,68 L692,73 Q678,74 675,86 Q682,80 692,81 L692,86 Z" fill="#d9d9d9" stroke="none" stroke-width="2" /><rect x="822" y="61" width="21" height="9" fill="#f2f2f2" /><rect x="816" y="69" width="33" height="15" fill="#d9d9d9" /><rect x="816" y="79" width="33" height="5" fill="#bdbdbd" /><rect x="822" y="78" width="21" height="16" fill="#f2f2f2" /><rect x="825" y="81" width="15" height="9" fill="#7ec1f6" /><rect x="888" y="61" width="17" height="8" fill="#f2f2f2" /><rect x="881" y="68" width="29" height="14" fill="#d9d9d9" /><rect x="881" y="78" width="29" height="4" fill="#bdbdbd" /><rect x="887" y="77" width="17" height="13" fill="#f2f2f2" /><rect x="889" y="80" width="11" height="6" fill="#7ec1f6" /><polygon points="893,84 902,84 902,80 914,87.5 902,95 902,91 893,91" fill="#7ec1f6" stroke="none" stroke-width="2" /><polygon points="949,61 971,61 979,69 979,93 949,93" fill="#d9d9d9" stroke="none" stroke-width="2" /><polygon points="971,61 979,69 971,69" fill="#f2f2f2" stroke="none" stroke-width="2" /><line x1="954" y1="61" x2="954" y2="93" stroke="#a5a5a5" stroke-width="2" /><line x1="949" y1="67" x2="971" y2="67" stroke="#a5a5a5" stroke-width="2" /><line x1="949" y1="87" x2="979" y2="87" stroke="#a5a5a5" stroke-width="2" /><rect x="962" y="77" width="21" height="18" fill="#f2f2f2" /><rect x="962" y="77" width="21" height="4" fill="#9a9a9a" /><rect x="966" y="84" width="3" height="2" fill="#555" /><rect x="971" y="84" width="9" height="2" fill="#555" /><rect x="966" y="89" width="3" height="2" fill="#555" /><rect x="971" y="89" width="9" height="2" fill="#555" /><polygon points="1015,61 1037,61 1045,69 1045,93 1015,93" fill="#d9d9d9" stroke="none" stroke-width="2" /><polygon points="1037,61 1045,69 1037,69" fill="#f2f2f2" stroke="none" stroke-width="2" /><line x1="1020" y1="61" x2="1020" y2="93" stroke="#a5a5a5" stroke-width="2" /><line x1="1015" y1="67" x2="1037" y2="67" stroke="#a5a5a5" stroke-width="2" /><line x1="1015" y1="87" x2="1045" y2="87" stroke="#a5a5a5" stroke-width="2" /><g transform="translate(1039,85) rotate(45)"><rect x="-3.5" y="-12" width="7" height="17" fill="#f6d27e" stroke="#3b4353" stroke-width="1.5"/><path d="M-3.5,-12 A3.5,3.5 0 0 1 3.5,-12 Z" fill="#e86060"/><polygon points="-3.5,5 3.5,5 0,11" fill="#c8c8c8"/></g><polygon points="1158,61 1178,61 1186,69 1186,93 1158,93" fill="#d9d9d9" stroke="none" stroke-width="2" /><polygon points="1179,61 1186,68 1179,68" fill="#f2f2f2" stroke="none" stroke-width="2" /><path d="M1177.5,61 V69.5 H1186" fill="none" stroke="#3b4252" stroke-width="1.5" /><polygon points="1154,70.5 1163.45,70.5 1163.45,64.0 1175,73 1163.45,82.0 1163.45,75.5 1154,75.5" fill="#7ec1f6" stroke="#3b4252" stroke-width="2" stroke-linejoin="miter"/><polygon points="1220,61 1240,61 1248,69 1248,93 1220,93" fill="#d9d9d9" stroke="none" stroke-width="2" /><polygon points="1241,61 1248,68 1241,68" fill="#f2f2f2" stroke="none" stroke-width="2" /><path d="M1239.5,61 V69.5 H1248" fill="none" stroke="#3b4252" stroke-width="1.5" /><polygon points="1232,80.5 1241.45,80.5 1241.45,74.0 1253,83 1241.45,92.0 1241.45,85.5 1232,85.5" fill="#7ec1f6" stroke="#3b4252" stroke-width="2" stroke-linejoin="miter"/><polygon points="1286,68 1309,68 1318,76 1318,92 1286,92" fill="#d9d9d9" stroke="none" stroke-width="2" /><polygon points="1310,68 1318,75.5 1310,75.5" fill="#f2f2f2" stroke="none" stroke-width="2" /><path d="M1309,68 V76.5 H1318" fill="none" stroke="#3b4252" stroke-width="1.5" /><path d="M1298,76 V66 A4.5,4.5 0 0 0 1289,66 V78 A3.5,3.5 0 0 0 1296,78 V68" fill="none" stroke="#3b4252" stroke-width="5.5" /><path d="M1298,76 V66 A4.5,4.5 0 0 0 1289,66 V78 A3.5,3.5 0 0 0 1296,78 V68" fill="none" stroke="#7ec1f6" stroke-width="2.2" /><polygon points="1352,64 1378,64 1378,92 1355,92 1352,89" fill="#bdbdbd" stroke="none" stroke-width="2" /><rect x="1358" y="64" width="12" height="11" fill="#f2f2f2" /><rect x="1357" y="84" width="19" height="8" fill="#f2f2f2" /><rect x="1360" y="85" width="2" height="6" fill="#3b4252" /><rect x="1357" y="83" width="20" height="1.5" fill="#3b4252" /><circle cx="1376" cy="70" r="10" fill="#3b4252" stroke="none" stroke-width="2" /><circle cx="1376" cy="70" r="8" fill="none" stroke="#7ec1f6" stroke-width="2.2" /><ellipse cx="1376" cy="70" rx="3.5" ry="8" fill="none" stroke="#7ec1f6" stroke-width="1.8"/><line x1="1368" y1="67" x2="1384" y2="67" stroke="#7ec1f6" stroke-width="1.6" /><line x1="1368" y1="73" x2="1384" y2="73" stroke="#7ec1f6" stroke-width="1.6" /><rect x="1493" y="62" width="27" height="26" fill="none" stroke="#e0e0e0" stroke-width="2"/><circle cx="1515" cy="84" r="6" fill="#3b4353" stroke="#e0e0e0" stroke-width="2" /><line x1="1519" y1="88" x2="1524" y2="93" stroke="#d8a060" stroke-width="2.5" /><path d="M1563,92 Q1556,82 1558,77 Q1560,75 1563,78 L1565,81 V66 Q1567,63 1569,66 V76 V63 Q1571,60 1574,63 V76 V64 Q1576,61 1579,64 V77 V68 Q1581,65 1584,68 V80 Q1584,88 1578,93 Z" fill="#d9d9d9" stroke="none" stroke-width="2" /><ellipse cx="1640" cy="77" rx="6" ry="15" fill="none" stroke="#e8e8e8" stroke-width="2"/><path d="M1630,71 L1625,77 L1630,83" fill="none" stroke="#e8e8e8" stroke-width="2" /><path d="M1648,70 Q1656,73 1656,77 Q1656,83 1640,85" fill="none" stroke="#e8e8e8" stroke-width="2" /><line x1="1640" y1="72" x2="1640" y2="81" stroke="#7ec1f6" stroke-width="2" /><line x1="1636" y1="77" x2="1645" y2="77" stroke="#7ec1f6" stroke-width="2" /><polygon points="1644,63 1650,66 1644,70" fill="#e8e8e8" stroke="none" stroke-width="2" /><rect x="1766" y="61" width="22" height="30" fill="#d9d9d9" /><rect x="1769" y="65" width="16" height="7" fill="#7ec1f6" /><rect x="1769" y="65" width="16" height="7" fill="none" stroke="#555" stroke-width="1"/><line x1="1769" y1="77" x2="1783" y2="77" stroke="#666" stroke-width="1.5" /><line x1="1769" y1="82" x2="1780" y2="82" stroke="#666" stroke-width="1.5" /><g transform="translate(1789,85) rotate(-45)"><rect x="-4" y="-10" width="8" height="8" fill="#e8e8e8"/><rect x="-5" y="-2" width="10" height="12" fill="#f0c060"/></g><polygon points="1830,76 1843,82 1837,84 1841,92 1838,93 1834,86 1830,90" fill="#f2f2f2" stroke="none" stroke-width="2" /><rect x="1844" y="76" width="19" height="17" fill="#f2f2f2" /><rect x="1847" y="80" width="2" height="2" fill="#3a7fd5" /><rect x="1851" y="80" width="9" height="2" fill="#3a7fd5" /><rect x="1847" y="84" width="2" height="2" fill="#3a7fd5" /><rect x="1851" y="84" width="9" height="2" fill="#3a7fd5" /><rect x="1847" y="88" width="2" height="2" fill="#3a7fd5" /><rect x="1851" y="88" width="9" height="2" fill="#3a7fd5" /><polygon points="1847,61 1840,71 1845,71 1842,78 1851,68 1846,68 1850,61" fill="#f6c84e" stroke="none" stroke-width="2" /><polygon points="1896,61 1914,61 1906,68 1896,78" fill="#d0d0d0" stroke="none" stroke-width="2" /><circle cx="1913" cy="73" r="10" fill="#92d59e" stroke="#3b4252" stroke-width="2" /><circle cx="1905" cy="84" r="9" fill="#92d59e" stroke="#3b4252" stroke-width="2" /><line x1="1916" y1="70" x2="1916" y2="93" stroke="#3b4252" stroke-width="5" /><line x1="1904" y1="82" x2="1928" y2="82" stroke="#3b4252" stroke-width="5" /><line x1="1916" y1="70" x2="1916" y2="93" stroke="#f2f2f2" stroke-width="2.5" /><line x1="1904" y1="82" x2="1928" y2="82" stroke="#f2f2f2" stroke-width="2.5" /><rect x="1911" y="77" width="10" height="10" fill="none" stroke="#f4f4f4" stroke-width="1.8"/><circle cx="1968" cy="68" r="7" fill="#92d59e" stroke="none" stroke-width="2" /><circle cx="1987" cy="86" r="7" fill="#92c6f2" stroke="none" stroke-width="2" /><path d="M1978,66 H1986 V73" fill="none" stroke="#f2f2f2" stroke-width="2" /><polygon points="1982,72 1990,72 1986,77" fill="#f2f2f2" stroke="none" stroke-width="2" /><polygon points="2031,61 2050,61 2058,69 2058,89 2031,89" fill="#d9d9d9" stroke="none" stroke-width="2" /><polygon points="2050,61 2058,69 2050,69" fill="#f2f2f2" stroke="none" stroke-width="2" /><rect x="2041" y="68" width="7" height="13" fill="#3b4252" /><rect x="2043" y="69" width="3" height="12" fill="#d8a868" /><polygon points="2034,93 2055,93 2049,81 2040,81" fill="#f0c070" stroke="#3b4252" stroke-width="1.5" /><circle cx="2105" cy="77" r="10" fill="#6b7380" stroke="#c8c8c8" stroke-width="2" /><rect x="2105" y="79" width="19" height="14" fill="#6b7380" stroke="#c8c8c8" stroke-width="2"/><path d="M2117,61 V76 M2123,61 V76 M2112,66 H2127 M2112,71 H2127" fill="none" stroke="#3b4252" stroke-width="4" /><path d="M2117,61 V76 M2123,61 V76 M2112,66 H2127 M2112,71 H2127" fill="none" stroke="#7ec1f6" stroke-width="2" /><rect x="2234" y="63" width="12" height="30" fill="#d9d9d9" /><rect x="2251" y="63" width="14" height="30" fill="#d9d9d9" /><rect x="2246" y="60" width="3" height="35" fill="#7ec1f6" /><polygon points="2258,63 2265,63 2265,70" fill="#f2f2f2" stroke="none" stroke-width="2" /><rect x="2237" y="70" width="5" height="6" fill="none" stroke="#e03030" stroke-width="1.8"/><rect x="2237" y="80" width="5" height="5" fill="none" stroke="#40b040" stroke-width="1.8"/><rect x="2255" y="73" width="5" height="4" fill="none" stroke="#888" stroke-width="1.5"/><rect x="2255" y="82" width="5" height="4" fill="none" stroke="#888" stroke-width="1.5"/><polygon points="2300,80 2333,63 2322,91 2313,83" fill="#7ec1f6" stroke="none" stroke-width="2" /><polygon points="2313,83 2333,63 2316,90" fill="#5ea8e6" stroke="none" stroke-width="2" /><rect x="2367" y="64" width="25" height="21" fill="#3b4353" stroke="#7ec1f6" stroke-width="2"/><path d="M2371,77 Q2374,71 2377,76 Q2380,80 2385,74" fill="none" stroke="#7ec1f6" stroke-width="1.8" /><path d="M2394,70 H2398 V91 H2372 V88" fill="none" stroke="#d9d9d9" stroke-width="2" /><path d="M2433,73 Q2431,66 2438,66 Q2440,62 2445,65 Q2451,64 2450,70 Q2453,75 2446,76 L2437,76 Q2432,76 2433,73 Z" fill="none" stroke="#d9d9d9" stroke-width="1.8" /><rect x="2441" y="72" width="25" height="16" fill="none" stroke="#7ec1f6" stroke-width="2"/><line x1="2454" y1="66" x2="2454" y2="82" stroke="#f2f2f2" stroke-width="2" /><polygon points="2449,78 2459,78 2454,84" fill="#f2f2f2" stroke="none" stroke-width="2" /><circle cx="2470" cy="66" r="11" fill="#f4f4f4" stroke="none" stroke-width="2" /><circle cx="2470" cy="66" r="9" fill="#e8743b" stroke="none" stroke-width="2" /><rect x="2574" y="63" width="25" height="29" fill="#d9d9d9" /><rect x="2579" y="60" width="15" height="6" fill="#f2f2f2" /><rect x="2581" y="58" width="11" height="3" fill="#f2f2f2" /><rect x="2578" y="70" width="3" height="2" fill="#3a7fd5" /><rect x="2583" y="70" width="11" height="2" fill="#3a7fd5" /><rect x="2578" y="77" width="3" height="2" fill="#3a7fd5" /><rect x="2583" y="77" width="11" height="2" fill="#3a7fd5" /><rect x="2578" y="84" width="3" height="2" fill="#3a7fd5" /><rect x="2583" y="84" width="11" height="2" fill="#3a7fd5" /><polygon points="2597,76 2590,86 2595,86 2592,94 2602,83 2597,83 2601,76" fill="#f6c84e" stroke="none" stroke-width="2" /><circle cx="2610" cy="66" r="11" fill="#f4f4f4" stroke="none" stroke-width="2" /><circle cx="2610" cy="66" r="9" fill="#e8743b" stroke="none" stroke-width="2" /><rect x="0" y="112" width="2880" height="44" fill="#3a4252" /><rect x="356" y="112" width="256" height="44" fill="#4a5467" /><rect x="0" y="156" width="2880" height="2" fill="#262a33" /><rect x="48" y="112" width="2" height="44" fill="#262a33" /><rect x="94" y="112" width="2" height="44" fill="#262a33" /><rect x="354" y="112" width="2" height="44" fill="#262a33" /><rect x="612" y="112" width="2" height="44" fill="#262a33" /><rect x="10" y="120" width="14" height="13" fill="#7ec1f6" /><rect x="25" y="122" width="13" height="11" fill="#d9d9d9" /><rect x="12" y="135" width="12" height="12" fill="#d9d9d9" /><rect x="25" y="135" width="13" height="12" fill="#d9d9d9" /><line x1="61" y1="134" x2="83" y2="134" stroke="#d0d0d0" stroke-width="2" /><line x1="72" y1="123" x2="72" y2="145" stroke="#d0d0d0" stroke-width="2" /></svg>
<div class="t" style="left:978px;top:1170px;font-size:21px;color:#c9ccd1;font-weight:normal;letter-spacing:0.05px;">Specify corner of window, enter a scale factor (nX or nXP), or</div><div class="t" style="left:978px;top:1200px;font-size:21px;color:#c9ccd1;font-weight:normal;letter-spacing:0.25px;">[All/Center/Dynamic/Extents/Previous/Scale/Window/Object] &lt;real time&gt;: 1/20xp</div><div class="t" style="left:978px;top:1230px;font-size:21px;color:#c9ccd1;font-weight:normal;letter-spacing:-1.0px;">Command: _.PSPACE</div><div class="t" style="left:978px;top:1260px;font-size:21px;color:#c9ccd1;font-weight:normal;letter-spacing:-0.28px;">Command:</div><div class="t" style="left:978px;top:1290px;font-size:21px;color:#c9ccd1;font-weight:normal;letter-spacing:-0.28px;">Command:</div><div class="t" style="left:978px;top:1320px;font-size:21px;color:#c9ccd1;font-weight:normal;letter-spacing:-0.46px;">Command: _qsave</div><div class="t" style="left:978px;top:1350px;font-size:21px;color:#c9ccd1;font-weight:normal;letter-spacing:-0.28px;">Command:</div><div class="t" style="left:978px;top:1380px;font-size:21px;color:#c9ccd1;font-weight:normal;letter-spacing:-0.28px;">Command:</div><div class="t" style="left:978px;top:1410px;font-size:21px;color:#c9ccd1;font-weight:normal;letter-spacing:-0.28px;">Command:</div><div class="t" style="left:978px;top:1440px;font-size:21px;color:#c9ccd1;font-weight:normal;letter-spacing:-0.28px;">Command:</div><div class="t" style="left:978px;top:1479px;font-size:23px;color:#a9adb4;font-weight:normal;font-style:italic;">Type a command</div><div class="t" style="left:38px;top:169px;font-size:24px;color:#f2f2f2;font-weight:normal;-webkit-text-stroke:0.6px #f2f2f2;">Drafting</div><div class="t" style="left:192px;top:169px;font-size:24px;color:#a9acb3;font-weight:normal;-webkit-text-stroke:0.6px #a9acb3;">Modeling</div><div class="t" style="left:34px;top:213px;font-size:20.3px;color:#ececec;font-weight:normal;-webkit-text-stroke:0.35px #ececec;">Draw</div><div class="t" style="left:34px;top:406px;font-size:20.3px;color:#ececec;font-weight:normal;-webkit-text-stroke:0.35px #ececec;">Hatch</div><div class="t" style="left:34px;top:549px;font-size:20.3px;color:#ececec;font-weight:normal;-webkit-text-stroke:0.35px #ececec;">Block</div><div class="t" style="left:34px;top:741px;font-size:20.3px;color:#ececec;font-weight:normal;-webkit-text-stroke:0.35px #ececec;">Modify</div><div class="t" style="left:34px;top:933px;font-size:20.3px;color:#ececec;font-weight:normal;-webkit-text-stroke:0.35px #ececec;">Text</div><div class="t" style="left:22px;top:966px;font-size:82px;color:#dadada;font-weight:normal;">A</div><div class="t" style="left:105px;top:963px;font-size:82px;color:#dadada;font-weight:normal;">A</div><div class="t" style="left:191px;top:966px;font-size:38px;color:#dadada;font-weight:normal;">A</div><div class="t" style="left:234px;top:968px;font-size:14px;color:#d9d9d9;font-weight:bold;">ABC</div><div class="t" style="left:296px;top:966px;font-size:18px;color:#7ec1f6;font-weight:bold;">A</div><div class="t" style="left:323px;top:971px;font-size:11.5px;color:#d9d9d9;font-weight:bold;">PDF</div><div class="t" style="left:337.5px;top:982px;font-size:21px;color:#7ec1f6;font-weight:normal;">A</div><div class="t" style="left:204px;top:1024px;font-size:22px;color:#f2f2f2;font-weight:normal;">A</div><div class="t" style="left:242px;top:1019px;font-size:15px;color:#f2f2f2;font-weight:normal;">A</div><div class="t" style="left:279px;top:1012px;font-size:16px;color:#7ec1f6;font-weight:bold;">A</div><div class="t" style="left:321px;top:1013px;font-size:11.5px;color:#d9d9d9;font-weight:bold;">PDF</div><div class="t" style="left:335px;top:1024px;font-size:19px;color:#d9d9d9;font-weight:normal;font-style:italic;">A</div><div class="t" style="left:34px;top:1077px;font-size:20.3px;color:#ececec;font-weight:normal;-webkit-text-stroke:0.35px #ececec;">Dimension</div><div class="t" style="left:252px;top:1164px;font-size:16px;color:#f2f2f2;font-weight:normal;">.1</div><div class="t" style="left:340px;top:1160px;font-size:14px;color:#7ec1f6;font-weight:bold;">x</div><div class="t" style="left:34px;top:1221px;font-size:20.3px;color:#ececec;font-weight:normal;-webkit-text-stroke:0.35px #ececec;">Leader</div><div class="t" style="left:34px;top:1365px;font-size:20.3px;color:#ececec;font-weight:normal;-webkit-text-stroke:0.35px #ececec;">Table</div><div class="t" style="left:209px;top:1444px;font-size:14px;color:#7ec1f6;font-weight:bold;">A</div><div class="t" style="left:34px;top:1509px;font-size:21px;color:#ececec;font-weight:normal;-webkit-text-stroke:0.35px #ececec;clip-path:inset(0 0 14px 0);">Parametric</div><div class="t" style="left:2429px;top:208px;font-size:25px;color:#f0f0f0;font-weight:normal;-webkit-text-stroke:0.3px #f0f0f0;">Layers</div><div class="t" style="left:2623px;top:337px;font-size:24px;color:#f4f4f4;font-weight:normal;-webkit-text-stroke:0.3px #f4f4f4;">0</div><div class="t" style="left:2442px;top:394px;font-size:23px;color:#f4f4f4;font-weight:normal;-webkit-text-stroke:0.3px #f4f4f4;">Unsaved Layer State</div><div class="t" style="left:2476px;top:446px;font-size:23.4px;color:#d0d3d8;font-weight:normal;-webkit-text-stroke:0.2px #d0d3d8;">Hide Layer List</div><div class="t" style="left:2534px;top:501px;font-size:22px;color:#d8d8d8;font-weight:bold;">N...</div><div class="t" style="left:2530px;top:543px;font-size:23.4px;color:#f4f4f4;font-weight:normal;-webkit-text-stroke:0.25px #f4f4f4;">janelas</div><div class="t" style="left:2712px;top:543px;font-size:23.4px;color:#f4f4f4;font-weight:normal;-webkit-text-stroke:0.25px #f4f4f4;">De...</div><div class="t" style="left:2530px;top:581px;font-size:23.4px;color:#f4f4f4;font-weight:normal;-webkit-text-stroke:0.25px #f4f4f4;">0</div><div class="t" style="left:2712px;top:581px;font-size:23.4px;color:#f4f4f4;font-weight:normal;-webkit-text-stroke:0.25px #f4f4f4;">De...</div><div class="t" style="left:2530px;top:619px;font-size:23.4px;color:#f4f4f4;font-weight:normal;-webkit-text-stroke:0.25px #f4f4f4;">círculo</div><div class="t" style="left:2712px;top:619px;font-size:23.4px;color:#f4f4f4;font-weight:normal;-webkit-text-stroke:0.25px #f4f4f4;">De...</div><div class="t" style="left:2530px;top:657px;font-size:23.4px;color:#f4f4f4;font-weight:normal;-webkit-text-stroke:0.25px #f4f4f4;">cónica</div><div class="t" style="left:2712px;top:657px;font-size:23.4px;color:#f4f4f4;font-weight:normal;-webkit-text-stroke:0.25px #f4f4f4;">De...</div><div class="t" style="left:2530px;top:695px;font-size:23.4px;color:#f4f4f4;font-weight:normal;-webkit-text-stroke:0.25px #f4f4f4;">elipse</div><div class="t" style="left:2712px;top:695px;font-size:23.4px;color:#f4f4f4;font-weight:normal;-webkit-text-stroke:0.25px #f4f4f4;">De...</div><div class="t" style="left:2530px;top:733px;font-size:23.4px;color:#f4f4f4;font-weight:normal;-webkit-text-stroke:0.25px #f4f4f4;">hiperb...</div><div class="t" style="left:2712px;top:733px;font-size:23.4px;color:#f4f4f4;font-weight:normal;-webkit-text-stroke:0.25px #f4f4f4;">De...</div><div class="t" style="left:2530px;top:771px;font-size:23.4px;color:#f4f4f4;font-weight:normal;-webkit-text-stroke:0.25px #f4f4f4;">parab...</div><div class="t" style="left:2712px;top:771px;font-size:23.4px;color:#f4f4f4;font-weight:normal;-webkit-text-stroke:0.25px #f4f4f4;">De...</div><div class="t" style="left:2485px;top:1465px;font-size:26px;color:#bfbfbf;font-weight:normal;">Search for layer</div><div class="t" style="left:394px;top:1528px;font-size:23px;color:#a3a7ae;font-weight:normal;">Model</div><div class="t" style="left:569px;top:1528px;font-size:23px;color:#e9ebee;font-weight:normal;-webkit-text-stroke:0.7px #e9ebee;">a4rd</div><div class="t" style="left:669px;top:1528px;font-size:23px;color:#a3a7ae;font-weight:normal;">Layout2</div><div class="t" style="left:1927px;top:1528px;font-size:21px;color:#b9bdc4;font-weight:normal;letter-spacing:1.1px;">1.2453, 0.0150 , 0.0000</div><div class="t" style="left:1203px;top:12px;font-size:27.3px;color:#a8acb4;font-weight:bold;">Autodesk AutoCAD 2026</div><div class="t" style="left:1550px;top:12px;font-size:27.3px;color:#a8acb4;font-weight:bold;">conicas.dwg</div><div class="t" style="left:2690px;top:7px;font-size:25.4px;color:#ececec;font-weight:normal;">Sara Martins</div><div class="t" style="left:105px;top:121px;font-size:23px;color:#a3a7ae;font-weight:normal;letter-spacing:0.4px;">Start</div><div class="t" style="left:362px;top:122px;font-size:22px;color:#e9ebee;font-weight:bold;">conicas*</div>
</div>
</body></html>
